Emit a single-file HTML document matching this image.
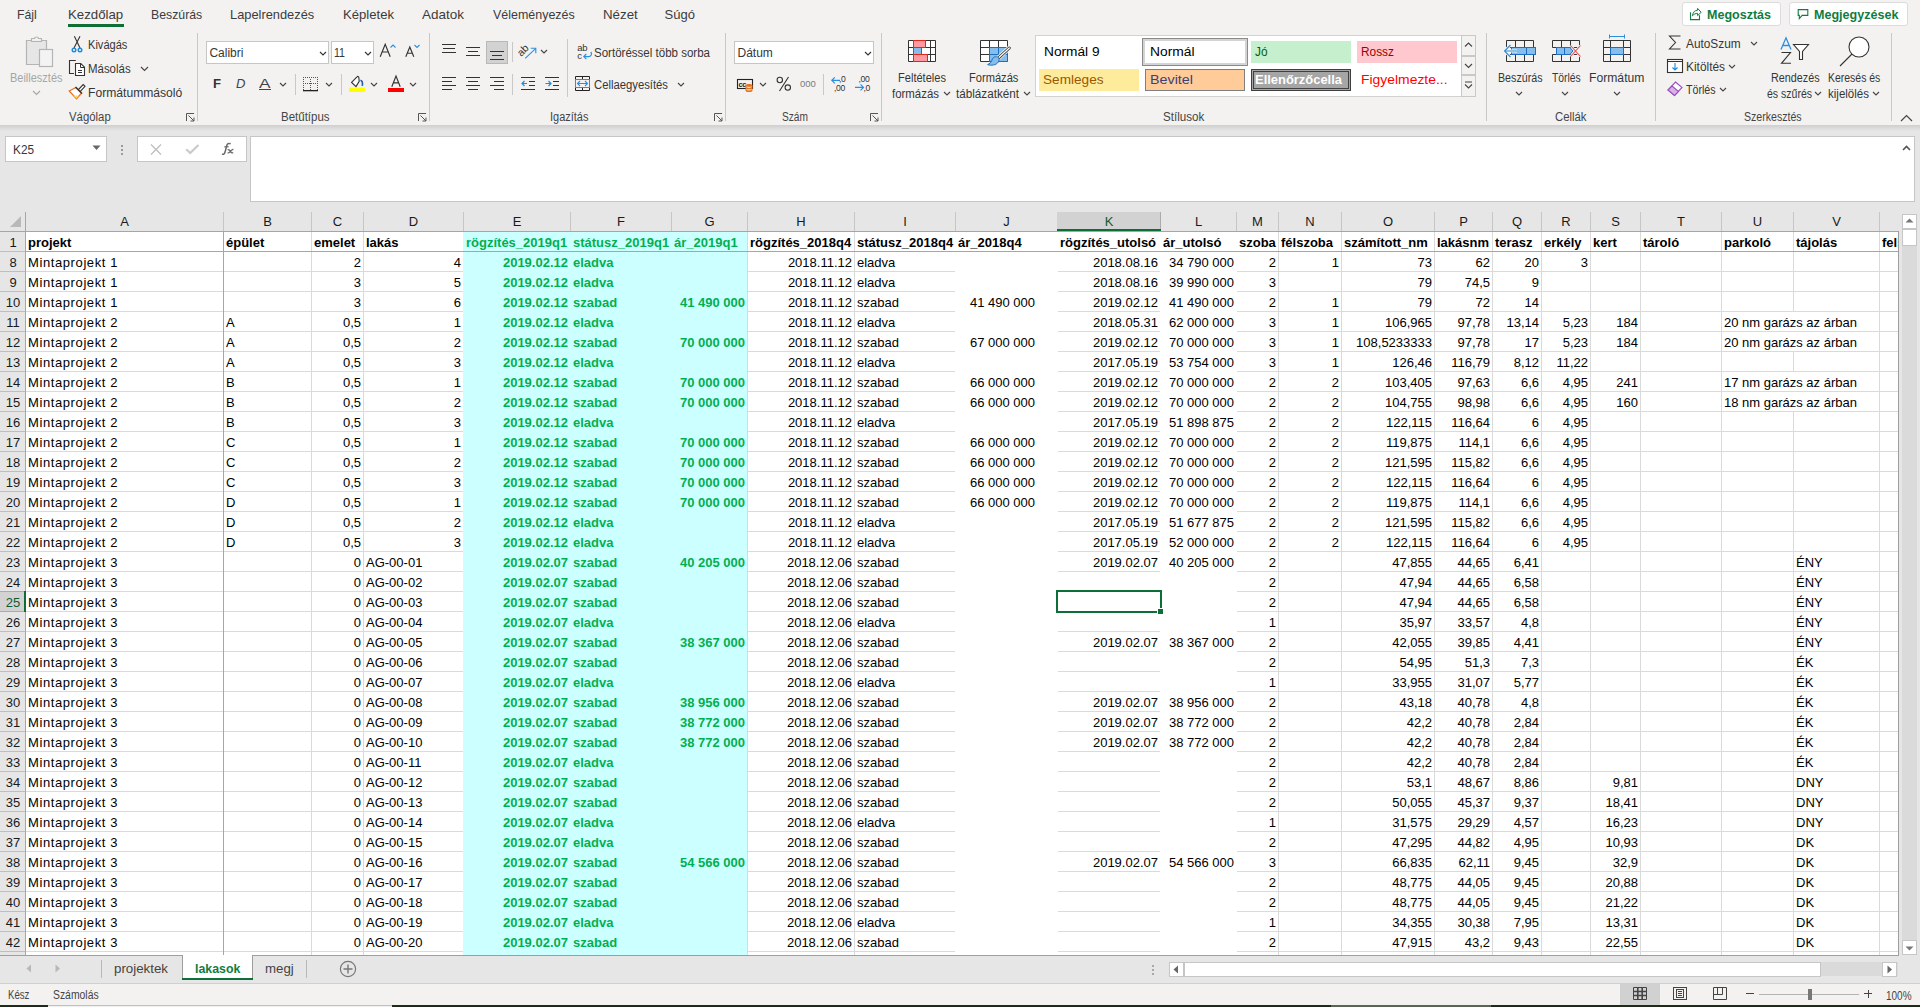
<!DOCTYPE html>
<html><head><meta charset="utf-8"><style>
html,body{margin:0;padding:0;width:1920px;height:1007px;overflow:hidden;background:#F3F2F1;}
body{position:relative;font-family:"Liberation Sans",sans-serif;}
body>div,body>svg{position:absolute;box-sizing:content-box;}
.t{white-space:nowrap;line-height:normal;}
svg{overflow:visible}
</style></head><body>
<div style="left:0px;top:0px;width:1920px;height:125px;background:#F3F2F1;"></div>
<div style="left:0px;top:125px;width:1920px;height:87px;background:#E6E6E6;"></div>
<div style="left:0;top:125px;width:1920px;height:6px;background:linear-gradient(#CFCFCF,#E6E6E6)"></div>
<div style="left:1899px;top:212px;width:21px;height:744px;background:#E6E6E6;"></div>
<div style="left:0px;top:956px;width:1920px;height:27px;background:#E6E6E6;"></div>
<div style="left:0px;top:983px;width:1920px;height:1px;background:#D0D0D0;"></div>
<div style="left:0px;top:984px;width:1920px;height:21px;background:#F3F2F1;"></div>
<div style="left:0px;top:1005px;width:1920px;height:2px;background:#1F2A1D;"></div>
<div style="left:48px;top:1005px;width:344px;height:1px;background:#C0C0C0;"></div>
<div style="left:48px;top:1006px;width:344px;height:1px;background:#F0F0F0;"></div>
<div style="left:1331px;top:1005px;width:160px;height:2px;background:#5A6555;"></div>
<div class="t" style="left:16.5px;top:7.23px;font-size:13px;color:#3C3C3C;font-weight:normal;transform:scaleX(0.9426);transform-origin:0 0;">Fájl</div>
<div class="t" style="left:67.75px;top:7.23px;font-size:13px;color:#3C3C3C;font-weight:normal;transform:scaleX(1.0187);transform-origin:0 0;">Kezdőlap</div>
<div class="t" style="left:150.75px;top:7.23px;font-size:13px;color:#3C3C3C;font-weight:normal;transform:scaleX(0.9455);transform-origin:0 0;">Beszúrás</div>
<div class="t" style="left:229.5px;top:7.23px;font-size:13px;color:#3C3C3C;font-weight:normal;transform:scaleX(0.9874);transform-origin:0 0;">Lapelrendezés</div>
<div class="t" style="left:342.75px;top:7.23px;font-size:13px;color:#3C3C3C;font-weight:normal;transform:scaleX(1.0077);transform-origin:0 0;">Képletek</div>
<div class="t" style="left:421.5px;top:7.23px;font-size:13px;color:#3C3C3C;font-weight:normal;transform:scaleX(1.0374);transform-origin:0 0;">Adatok</div>
<div class="t" style="left:492.5px;top:7.23px;font-size:13px;color:#3C3C3C;font-weight:normal;transform:scaleX(0.9584);transform-origin:0 0;">Véleményezés</div>
<div class="t" style="left:602.75px;top:7.23px;font-size:13px;color:#3C3C3C;font-weight:normal;transform:scaleX(1.0230);transform-origin:0 0;">Nézet</div>
<div class="t" style="left:664.5px;top:7.23px;font-size:13px;color:#3C3C3C;font-weight:normal;">Súgó</div>
<div style="left:68px;top:24px;width:56px;height:3px;background:#0D6E38;"></div>
<div style="left:1682px;top:2px;width:97px;height:22px;background:#fff;border:1px solid #DCDCDC;border-radius:3px"></div>
<div style="left:1789px;top:2px;width:117px;height:22px;background:#fff;border:1px solid #DCDCDC;border-radius:3px"></div>
<div class="t" style="left:1706.5px;top:7.23px;font-size:13px;color:#107C41;font-weight:bold;transform:scaleX(0.9629);transform-origin:0 0;">Megosztás</div>
<div class="t" style="left:1813.5px;top:7.23px;font-size:13px;color:#107C41;font-weight:bold;transform:scaleX(0.9662);transform-origin:0 0;">Megjegyzések</div>
<svg style="left:1686px;top:4px" width="20" height="20"><path d="M4.5 8.3 V15.6 H13.5 V11.2" fill="none" stroke="#107C41" stroke-width="1.1"/><path d="M6.4 11.8 C7 8 9 6.2 11.6 6.2 V4.4 L15.2 8.3 L11.6 11.6 V9.4 C9.5 9.3 8 10.2 6.4 11.8 Z" fill="none" stroke="#107C41" stroke-width="1"/></svg>
<svg style="left:1794px;top:4px" width="20" height="20"><path d="M4.2 5.6 H13.8 V11.4 H8.2 L5.3 14.6 V11.4 H4.2 Z" fill="none" stroke="#107C41" stroke-width="1.1"/></svg>
<div style="left:197px;top:33px;width:1px;height:88px;background:#C8C8C8;"></div>
<div style="left:429px;top:33px;width:1px;height:88px;background:#C8C8C8;"></div>
<div style="left:725px;top:33px;width:1px;height:88px;background:#C8C8C8;"></div>
<div style="left:881px;top:33px;width:1px;height:88px;background:#C8C8C8;"></div>
<div style="left:1486px;top:33px;width:1px;height:88px;background:#C8C8C8;"></div>
<div style="left:1655px;top:33px;width:1px;height:88px;background:#C8C8C8;"></div>
<div style="left:1891px;top:33px;width:1px;height:88px;background:#C8C8C8;"></div>
<div class="t" style="left:68.8px;top:109.64px;font-size:12px;color:#444;font-weight:normal;transform:scaleX(0.9471);transform-origin:0 0;">Vágólap</div>
<div class="t" style="left:281.4px;top:109.64px;font-size:12px;color:#444;font-weight:normal;transform:scaleX(0.9571);transform-origin:0 0;">Betűtípus</div>
<div class="t" style="left:550.1px;top:109.64px;font-size:12px;color:#444;font-weight:normal;transform:scaleX(0.9143);transform-origin:0 0;">Igazítás</div>
<div class="t" style="left:782.0px;top:109.64px;font-size:12px;color:#444;font-weight:normal;transform:scaleX(0.8477);transform-origin:0 0;">Szám</div>
<div class="t" style="left:1163.0px;top:109.64px;font-size:12px;color:#444;font-weight:normal;transform:scaleX(0.9667);transform-origin:0 0;">Stílusok</div>
<div class="t" style="left:1554.8px;top:109.64px;font-size:12px;color:#444;font-weight:normal;transform:scaleX(0.9443);transform-origin:0 0;">Cellák</div>
<div class="t" style="left:1743.9px;top:109.64px;font-size:12px;color:#444;font-weight:normal;transform:scaleX(0.8815);transform-origin:0 0;">Szerkesztés</div>
<svg style="left:186px;top:113px" width="9" height="9"><path d="M0.5 8 V0.5 H8" fill="none" stroke="#555" stroke-width="1"/><path d="M2.5 2.5 L8 8 M4.5 8 H8 V4.5" fill="none" stroke="#555" stroke-width="1"/></svg>
<svg style="left:418px;top:113px" width="9" height="9"><path d="M0.5 8 V0.5 H8" fill="none" stroke="#555" stroke-width="1"/><path d="M2.5 2.5 L8 8 M4.5 8 H8 V4.5" fill="none" stroke="#555" stroke-width="1"/></svg>
<svg style="left:714px;top:113px" width="9" height="9"><path d="M0.5 8 V0.5 H8" fill="none" stroke="#555" stroke-width="1"/><path d="M2.5 2.5 L8 8 M4.5 8 H8 V4.5" fill="none" stroke="#555" stroke-width="1"/></svg>
<svg style="left:870px;top:113px" width="9" height="9"><path d="M0.5 8 V0.5 H8" fill="none" stroke="#555" stroke-width="1"/><path d="M2.5 2.5 L8 8 M4.5 8 H8 V4.5" fill="none" stroke="#555" stroke-width="1"/></svg>
<svg style="left:1900px;top:114px" width="13" height="8"><polyline points="1,7 6.5,1.5 12,7" fill="none" stroke="#444" stroke-width="1.2"/></svg>
<div class="t" style="left:10.1px;top:70.74px;font-size:12px;color:#A6A6A6;font-weight:normal;transform:scaleX(0.9153);transform-origin:0 0;">Beillesztés</div>
<svg style="left:32.0px;top:90.25px" width="9" height="5.5"><polyline points="1,1 4.5,4.5 8,1" fill="none" stroke="#A6A6A6" stroke-width="1.1"/></svg>
<svg style="left:25px;top:36px" width="30" height="32"><path d="M1.5 4.5 H21.5 V28.5 H1.5 Z" fill="#E6E6E6" stroke="#B4B4B4" stroke-width="1.2"/><path d="M6.5 5.5 V2.5 H9.5 C9.5 0.5 13.5 0.5 13.5 2.5 H16.5 V5.5 Z" fill="#F0F0F0" stroke="#B4B4B4" stroke-width="1.1"/><rect x="14.5" y="13.5" width="13" height="17" fill="#F3F3F3" stroke="#B4B4B4" stroke-width="1.2"/></svg>
<div class="t" style="left:88.4px;top:38.14px;font-size:12px;color:#363636;font-weight:normal;transform:scaleX(0.9230);transform-origin:0 0;">Kivágás</div>
<div class="t" style="left:88.4px;top:62.14px;font-size:12px;color:#363636;font-weight:normal;transform:scaleX(0.9533);transform-origin:0 0;">Másolás</div>
<svg style="left:140.1px;top:65.75px" width="9" height="5.5"><polyline points="1,1 4.5,4.5 8,1" fill="none" stroke="#444" stroke-width="1.1"/></svg>
<div class="t" style="left:88.4px;top:85.94px;font-size:12px;color:#363636;font-weight:normal;transform:scaleX(1.0101);transform-origin:0 0;">Formátummásoló</div>
<svg style="left:70px;top:35px" width="14" height="18"><path d="M4.4 1.2 L10 13 M10 1.2 L4 13" fill="none" stroke="#333" stroke-width="1.1"/><circle cx="4" cy="15" r="1.8" fill="none" stroke="#1E8BDA" stroke-width="1.4"/><circle cx="10" cy="15" r="1.8" fill="none" stroke="#1E8BDA" stroke-width="1.4"/></svg>
<svg style="left:68px;top:59px" width="18" height="18"><path d="M7.8 1.5 H1.5 V14.5 H6" fill="none" stroke="#333" stroke-width="1.1"/><path d="M7.5 4.5 H12.8 L16.5 8.2 V16.5 H7.5 Z" fill="#fff" stroke="#333" stroke-width="1.1"/><path d="M12.5 4.5 V8.5 H16.5" fill="none" stroke="#333" stroke-width="1"/><path d="M10 11.5 H14 M10 13.5 H14" stroke="#333" stroke-width="1"/></svg>
<svg style="left:68px;top:83px" width="18" height="17"><path d="M1.2 8 L8 4.5 L13.5 10.2 L8.5 15.8 Z" fill="#fff" stroke="#E8711B" stroke-width="1.3"/><path d="M5 12.5 L8.5 15.5 L11 12.8 Z" fill="#FFD36B"/><path d="M10.5 6.5 L15.2 1.5 L17 3.3 L12.3 8.3" fill="#fff" stroke="#333" stroke-width="1.1"/><path d="M7.5 4 L14 10.5" stroke="#333" stroke-width="1.4"/></svg>
<div style="left:206px;top:41px;width:121px;height:21px;background:#fff;border:1px solid #C6C6C6"></div>
<div style="left:331px;top:41px;width:41px;height:21px;background:#fff;border:1px solid #C6C6C6"></div>
<div class="t" style="left:209.4px;top:45.64px;font-size:12px;color:#363636;font-weight:normal;">Calibri</div>
<div class="t" style="left:334px;top:45.64px;font-size:12px;color:#363636;font-weight:normal;transform:scaleX(0.8833);transform-origin:0 0;">11</div>
<svg style="left:318.5px;top:51.0px" width="8" height="5.0"><polyline points="1,1 4.0,4.0 7,1" fill="none" stroke="#333" stroke-width="1.1"/></svg>
<svg style="left:363.5px;top:51.0px" width="8" height="5.0"><polyline points="1,1 4.0,4.0 7,1" fill="none" stroke="#333" stroke-width="1.1"/></svg>
<svg style="left:379px;top:43px" width="18" height="15"><path d="M1.2 13.8 L6.2 1.2 L11.2 13.8 M3.2 9 H9.2" fill="none" stroke="#333" stroke-width="1.15"/></svg>
<svg style="left:390px;top:44px" width="6" height="4"><polyline points="0.5,3.5 3,1 5.5,3.5" fill="none" stroke="#2B8FE0" stroke-width="1.1"/></svg>
<svg style="left:405px;top:46px" width="11" height="12"><path d="M0.8 10.8 L4.8 1 L8.8 10.8 M2.4 7.2 H7.2" fill="none" stroke="#333" stroke-width="1.15"/></svg>
<svg style="left:414px;top:44px" width="6" height="4"><polyline points="0.5,1 3,3.5 5.5,1" fill="none" stroke="#2B8FE0" stroke-width="1.1"/></svg>
<div class="t" style="left:213px;top:76.23px;font-size:13px;color:#333;font-weight:bold;transform:scaleX(1.0079);transform-origin:0 0;">F</div>
<div class="t" style="left:236px;top:76.2px;font-size:13px;color:#444;font-style:italic;">D</div>
<div class="t" style="left:258.75px;top:76.23px;font-size:13px;color:#444;font-weight:normal;transform:scaleX(1.3261);transform-origin:0 0;">A</div>
<div style="left:259px;top:89px;width:12px;height:1px;background:#444;"></div>
<svg style="left:278.5px;top:81.5px" width="8" height="5.0"><polyline points="1,1 4.0,4.0 7,1" fill="none" stroke="#444" stroke-width="1.1"/></svg>
<div style="left:295px;top:74px;width:1px;height:21px;background:#C8C8C8;"></div>
<svg style="left:303px;top:77px" width="16" height="15"><g fill="#555"><rect x="0" y="0" width="1" height="1"/><rect x="0" y="6" width="1" height="1"/><rect x="2" y="0" width="1" height="1"/><rect x="2" y="6" width="1" height="1"/><rect x="4" y="0" width="1" height="1"/><rect x="4" y="6" width="1" height="1"/><rect x="6" y="0" width="1" height="1"/><rect x="6" y="6" width="1" height="1"/><rect x="8" y="0" width="1" height="1"/><rect x="8" y="6" width="1" height="1"/><rect x="10" y="0" width="1" height="1"/><rect x="10" y="6" width="1" height="1"/><rect x="12" y="0" width="1" height="1"/><rect x="12" y="6" width="1" height="1"/><rect x="14" y="0" width="1" height="1"/><rect x="14" y="6" width="1" height="1"/><rect x="0" y="2" width="1" height="1"/><rect x="7" y="2" width="1" height="1"/><rect x="14" y="2" width="1" height="1"/><rect x="0" y="4" width="1" height="1"/><rect x="7" y="4" width="1" height="1"/><rect x="14" y="4" width="1" height="1"/><rect x="0" y="6" width="1" height="1"/><rect x="7" y="6" width="1" height="1"/><rect x="14" y="6" width="1" height="1"/><rect x="0" y="8" width="1" height="1"/><rect x="7" y="8" width="1" height="1"/><rect x="14" y="8" width="1" height="1"/><rect x="0" y="10" width="1" height="1"/><rect x="7" y="10" width="1" height="1"/><rect x="14" y="10" width="1" height="1"/><rect x="0" y="12" width="1" height="1"/><rect x="7" y="12" width="1" height="1"/><rect x="14" y="12" width="1" height="1"/></g><rect x="0" y="13" width="15" height="1.3" fill="#222"/></svg>
<svg style="left:324.75px;top:81.5px" width="8" height="5.0"><polyline points="1,1 4.0,4.0 7,1" fill="none" stroke="#444" stroke-width="1.1"/></svg>
<div style="left:341px;top:74px;width:1px;height:21px;background:#C8C8C8;"></div>
<svg style="left:349px;top:74px" width="18" height="19"><path d="M2.6 8.4 L8 2.8 C8.6 2.1 9.7 2.3 9.8 3.3 L10.2 7.4 L7 12.6 Z" fill="#fff" stroke="#333" stroke-width="1.1"/><path d="M11.4 6.2 C13 6.6 13.8 9 13.3 11.8" fill="none" stroke="#1E5FB4" stroke-width="1.6"/><rect x="0" y="13.8" width="16" height="4.2" fill="#FFFF00"/></svg>
<svg style="left:370.0px;top:81.5px" width="8" height="5.0"><polyline points="1,1 4.0,4.0 7,1" fill="none" stroke="#444" stroke-width="1.1"/></svg>
<svg style="left:391px;top:75px" width="11" height="13"><path d="M0.8 11.8 L5 1 L9.2 11.8 M2.5 7.8 H7.5" fill="none" stroke="#333" stroke-width="1.15"/></svg>
<div style="left:388px;top:88px;width:16px;height:4px;background:#FF0000;"></div>
<svg style="left:409.0px;top:81.5px" width="8" height="5.0"><polyline points="1,1 4.0,4.0 7,1" fill="none" stroke="#444" stroke-width="1.1"/></svg>
<svg style="left:442px;top:44px" width="16" height="16"><rect x="0" y="0" width="14" height="1" fill="#333"/><rect x="1" y="4" width="12" height="1" fill="#333"/><rect x="0" y="8" width="14" height="1" fill="#333"/></svg>
<svg style="left:466px;top:47px" width="16" height="16"><rect x="0" y="0" width="14" height="1" fill="#333"/><rect x="2" y="4" width="10" height="1" fill="#333"/><rect x="0" y="8" width="14" height="1" fill="#333"/></svg>
<div style="left:486px;top:41px;width:20px;height:21px;background:#D2D2D2;border:1px solid #B8B8B8"></div>
<svg style="left:490px;top:51px" width="16" height="16"><rect x="0" y="0" width="14" height="1" fill="#333"/><rect x="2" y="4" width="10" height="1" fill="#333"/><rect x="0" y="8" width="14" height="1" fill="#333"/></svg>
<div style="left:512px;top:42px;width:1px;height:20px;background:#C8C8C8;"></div>
<svg style="left:518px;top:42px" width="20" height="18"><text x="0" y="0" font-size="10.5" font-family="Liberation Sans" fill="#333" transform="translate(3.2 15) rotate(-45)">ab</text><path d="M7.2 16.4 L17.6 6.6" fill="none" stroke="#2B8FE0" stroke-width="1.1"/><path d="M12.8 6.3 H17.8 V11.3" fill="none" stroke="#2B8FE0" stroke-width="1.1"/></svg>
<svg style="left:539.75px;top:49.0px" width="8" height="5.0"><polyline points="1,1 4.0,4.0 7,1" fill="none" stroke="#444" stroke-width="1.1"/></svg>
<svg style="left:442px;top:77px" width="16" height="16"><rect x="0" y="0" width="14" height="1" fill="#333"/><rect x="0" y="4" width="10" height="1" fill="#333"/><rect x="0" y="8" width="14" height="1" fill="#333"/><rect x="0" y="12" width="10" height="1" fill="#333"/></svg>
<svg style="left:466px;top:77px" width="16" height="16"><rect x="0" y="0" width="14" height="1" fill="#333"/><rect x="2" y="4" width="10" height="1" fill="#333"/><rect x="0" y="8" width="14" height="1" fill="#333"/><rect x="2" y="12" width="10" height="1" fill="#333"/></svg>
<svg style="left:490px;top:77px" width="16" height="16"><rect x="0" y="0" width="14" height="1" fill="#333"/><rect x="4" y="4" width="10" height="1" fill="#333"/><rect x="0" y="8" width="14" height="1" fill="#333"/><rect x="4" y="12" width="10" height="1" fill="#333"/></svg>
<div style="left:512px;top:74px;width:1px;height:21px;background:#C8C8C8;"></div>
<svg style="left:521px;top:77px" width="16" height="15"><rect x="0" y="0" width="14" height="1" fill="#333"/><rect x="8" y="4" width="6" height="1" fill="#333"/><rect x="8" y="8" width="6" height="1" fill="#333"/><rect x="0" y="12" width="14" height="1" fill="#333"/><path d="M6 6.5 H1 M3.5 4 L1 6.5 L3.5 9" fill="none" stroke="#1E8BDA" stroke-width="1.2"/></svg>
<svg style="left:545px;top:77px" width="16" height="15"><rect x="0" y="0" width="14" height="1" fill="#333"/><rect x="8" y="4" width="6" height="1" fill="#333"/><rect x="8" y="8" width="6" height="1" fill="#333"/><rect x="0" y="12" width="14" height="1" fill="#333"/><path d="M0.5 6.5 H6 M3.5 4 L6 6.5 L3.5 9" fill="none" stroke="#1E8BDA" stroke-width="1.2"/></svg>
<div style="left:567px;top:39px;width:1px;height:58px;background:#C8C8C8;"></div>
<svg style="left:576px;top:43px" width="18" height="19"><text x="1.2" y="8.3" font-size="9.5" font-family="Liberation Sans" fill="#333" letter-spacing="-0.2">ab</text><text x="1.2" y="15.7" font-size="9.5" font-family="Liberation Sans" fill="#333">c</text><path d="M14.8 9 C16.5 11 15 13.6 12.5 13.6 H8" fill="none" stroke="#2B8FE0" stroke-width="1.2"/><path d="M10.3 11 L7.8 13.6 L10.3 16.2" fill="none" stroke="#2B8FE0" stroke-width="1.2"/></svg>
<div class="t" style="left:594.4px;top:46.14px;font-size:12px;color:#363636;font-weight:normal;transform:scaleX(0.9610);transform-origin:0 0;">Sortöréssel több sorba</div>
<svg style="left:575px;top:76px" width="16" height="16"><path d="M0.5 3.5 V0.5 H14.5 V3.5 M0.5 11.5 V14.5 H14.5 V11.5 M7.5 0.5 V3.5 M7.5 11.5 V14.5" fill="none" stroke="#222" stroke-width="1"/><rect x="0.5" y="3.5" width="14" height="8" fill="none" stroke="#2B8FE0" stroke-width="1"/><path d="M2.5 7.5 H12.5 M5 5 L2.5 7.5 L5 10 M10 5 L12.5 7.5 L10 10" fill="none" stroke="#2B8FE0" stroke-width="1.1"/></svg>
<div class="t" style="left:594.4px;top:77.74px;font-size:12px;color:#363636;font-weight:normal;transform:scaleX(0.9402);transform-origin:0 0;">Cellaegyesítés</div>
<svg style="left:677.0px;top:81.5px" width="8" height="5.0"><polyline points="1,1 4.0,4.0 7,1" fill="none" stroke="#444" stroke-width="1.1"/></svg>
<div style="left:734px;top:41px;width:138px;height:21px;background:#fff;border:1px solid #C6C6C6"></div>
<div class="t" style="left:737.5px;top:45.64px;font-size:12px;color:#363636;font-weight:normal;">Dátum</div>
<svg style="left:863.5px;top:51.0px" width="8" height="5.0"><polyline points="1,1 4.0,4.0 7,1" fill="none" stroke="#333" stroke-width="1.1"/></svg>
<svg style="left:736px;top:78px" width="19" height="15"><rect x="1.5" y="1.5" width="15" height="9" fill="none" stroke="#222" stroke-width="1.1"/><text x="2.6" y="8.8" font-size="7.5" font-weight="bold" font-family="Liberation Sans" fill="#222" letter-spacing="-0.6">cc</text><path d="M9.5 7.5 C9.5 5.5 16.5 5.5 16.5 7.5 V12.5 C16.5 14.5 9.5 14.5 9.5 12.5 Z" fill="#E8711B"/><path d="M10.5 8.8 C11.5 9.6 14.5 9.6 15.5 8.8 M10.5 11.3 C11.5 12.1 14.5 12.1 15.5 11.3" fill="none" stroke="#fff" stroke-width="0.9"/></svg>
<svg style="left:758.5px;top:81.5px" width="8" height="5.0"><polyline points="1,1 4.0,4.0 7,1" fill="none" stroke="#444" stroke-width="1.1"/></svg>
<svg style="left:776px;top:76px" width="16" height="16"><circle cx="3.8" cy="4" r="2.7" fill="none" stroke="#333" stroke-width="1.1"/><circle cx="11.8" cy="11.6" r="2.7" fill="none" stroke="#333" stroke-width="1.1"/><path d="M12.5 1 L3.5 15" stroke="#333" stroke-width="1.1"/></svg>
<div class="t" style="left:799.5px;top:78.84px;font-size:8.8px;color:#7A7A7A;font-weight:normal;transform:scaleX(1.0769);transform-origin:0 0;">000</div>
<div style="left:823px;top:74px;width:1px;height:21px;background:#C8C8C8;"></div>
<svg style="left:830px;top:75px" width="17" height="17"><text x="9" y="7.2" font-size="8.6" font-family="Liberation Sans" fill="#333" letter-spacing="-0.3">,0</text><text x="4" y="15.8" font-size="8.6" font-family="Liberation Sans" fill="#333" letter-spacing="-0.3">,00</text><path d="M10 5.3 H1.8 M4.8 2.3 L1.8 5.3 L4.8 8.3" fill="none" stroke="#2B8FE0" stroke-width="1.2"/></svg>
<svg style="left:854px;top:75px" width="17" height="17"><text x="4.5" y="7.2" font-size="8.6" font-family="Liberation Sans" fill="#333" letter-spacing="-0.3">,00</text><text x="9.5" y="15.8" font-size="8.6" font-family="Liberation Sans" fill="#333" letter-spacing="-0.3">,0</text><path d="M1 12.4 H9.5 M6.5 9.4 L9.5 12.4 L6.5 15.4" fill="none" stroke="#2B8FE0" stroke-width="1.2"/></svg>
<svg style="left:908px;top:40px" width="29" height="23"><path d="M0.5 0.5 H27.5 V21.5 H0.5 Z M0.5 7.5 H27.5 M0.5 14.5 H27.5 M5.5 0.5 V21.5 M22.5 0.5 V21.5" fill="#fff" stroke="#333" stroke-width="1"/><rect x="5.5" y="0.5" width="12" height="7" fill="#FF9AA0" stroke="#E0261B" stroke-width="1"/><rect x="5.5" y="7.5" width="8" height="7" fill="#86BDEB" stroke="#1F6FC0" stroke-width="1"/><rect x="5.5" y="14.5" width="14" height="7" fill="#FF9AA0" stroke="#E0261B" stroke-width="1"/></svg>
<div class="t" style="left:897.5px;top:70.89px;font-size:12px;color:#363636;font-weight:normal;transform:scaleX(0.9228);transform-origin:0 0;">Feltételes</div>
<div class="t" style="left:892px;top:86.54px;font-size:12px;color:#363636;font-weight:normal;transform:scaleX(0.9525);transform-origin:0 0;">formázás</div>
<svg style="left:943.0px;top:90.5px" width="8" height="5.0"><polyline points="1,1 4.0,4.0 7,1" fill="none" stroke="#444" stroke-width="1.1"/></svg>
<svg style="left:980px;top:40px" width="32" height="26"><path d="M0.5 0.5 H27.5 V21.5 H0.5 Z M0.5 7.5 H27.5 M0.5 14.5 H27.5 M9.5 0.5 V21.5 M18.5 0.5 V21.5" fill="#fff" stroke="#333" stroke-width="1"/><path d="M9.5 7.5 H27.5 V21.5 H9.5 Z M18.5 7.5 V21.5 M9.5 14.5 H27.5" fill="#86BDEB" stroke="#1F6FC0" stroke-width="1"/><path d="M29.3 8 L17.5 18.8" stroke="#F3F2F1" stroke-width="4.6" stroke-linecap="round"/><path d="M29.3 8 L17.5 18.8" stroke="#333" stroke-width="3" stroke-linecap="round"/><path d="M29.3 8 L17.5 18.8" stroke="#fff" stroke-width="1.3" stroke-linecap="round"/><path d="M18.5 17.5 C16 15.8 12.8 17 12 20 C11.4 22.3 9.5 23.8 7.6 24.6 C11 25.8 16.2 25.2 18.2 22.2 C19.2 20.6 19.3 18.8 18.5 17.5 Z" fill="#86BDEB" stroke="#1F6FC0" stroke-width="1"/></svg>
<div class="t" style="left:969.4px;top:70.89px;font-size:12px;color:#363636;font-weight:normal;transform:scaleX(0.9261);transform-origin:0 0;">Formázás</div>
<div class="t" style="left:956px;top:86.54px;font-size:12px;color:#363636;font-weight:normal;transform:scaleX(0.9739);transform-origin:0 0;">táblázatként</div>
<svg style="left:1023.0px;top:90.5px" width="8" height="5.0"><polyline points="1,1 4.0,4.0 7,1" fill="none" stroke="#444" stroke-width="1.1"/></svg>
<div style="left:1035px;top:35px;width:439px;height:60px;background:#fff;border:1px solid #D2D2D2"></div>
<div class="t" style="left:1043.75px;top:44.99px;font-size:12.5px;color:#000;font-weight:normal;transform:scaleX(1.0946);transform-origin:0 0;">Normál 9</div>
<div style="left:1142px;top:38px;width:104px;height:26px;background:#fff;border:1px solid #8A8A8A;box-shadow:inset 0 0 0 2px #D4D4D4"></div>
<div class="t" style="left:1149.75px;top:44.99px;font-size:12.5px;color:#000;font-weight:normal;transform:scaleX(1.1047);transform-origin:0 0;">Normál</div>
<div style="left:1251px;top:41px;width:100px;height:22px;background:#C6EFCE;"></div>
<div class="t" style="left:1254.5px;top:44.99px;font-size:12.5px;color:#006100;font-weight:normal;transform:scaleX(0.9467);transform-origin:0 0;">Jó</div>
<div style="left:1357px;top:41px;width:100px;height:22px;background:#FFC7CE;"></div>
<div class="t" style="left:1361px;top:44.99px;font-size:12.5px;color:#9C0006;font-weight:normal;transform:scaleX(0.9501);transform-origin:0 0;">Rossz</div>
<div style="left:1039px;top:69px;width:100px;height:22px;background:#FFEB9C;"></div>
<div class="t" style="left:1043px;top:72.69px;font-size:12.5px;color:#9C5700;font-weight:normal;transform:scaleX(1.0883);transform-origin:0 0;">Semleges</div>
<div style="left:1145px;top:69px;width:98px;height:20px;background:#FFCC99;border:1px solid #7F7F7F"></div>
<div class="t" style="left:1149.5px;top:72.69px;font-size:12.5px;color:#3F3F76;font-weight:normal;transform:scaleX(1.1457);transform-origin:0 0;">Bevitel</div>
<div style="left:1251px;top:69px;width:98px;height:20px;background:#A5A5A5;border:1px solid #3F3F3F;box-shadow:inset 0 0 0 1px #A5A5A5, inset 0 0 0 2px #3F3F3F"></div>
<div class="t" style="left:1255px;top:72.69px;font-size:12.5px;color:#fff;font-weight:bold;transform:scaleX(1.0349);transform-origin:0 0;">Ellenőrzőcella</div>
<div class="t" style="left:1361px;top:72.69px;font-size:12.5px;color:#FF0000;font-weight:normal;transform:scaleX(1.1119);transform-origin:0 0;">Figyelmezte...</div>
<div style="left:1461px;top:35px;width:13px;height:19px;background:#F3F2F1;border:1px solid #C8C8C8"></div>
<div style="left:1461px;top:56px;width:13px;height:17px;background:#F3F2F1;border:1px solid #C8C8C8"></div>
<div style="left:1461px;top:75px;width:13px;height:20px;background:#F3F2F1;border:1px solid #C8C8C8"></div>
<svg style="left:1464px;top:42px" width="9" height="5"><polyline points="1,4.5 4.5,1 8,4.5" fill="none" stroke="#444" stroke-width="1.1"/></svg>
<svg style="left:1464px;top:63px" width="9" height="5"><polyline points="1,1 4.5,4.5 8,1" fill="none" stroke="#444" stroke-width="1.1"/></svg>
<svg style="left:1464px;top:81px" width="9" height="9"><rect x="1" y="0.5" width="7" height="1" fill="#444"/><polyline points="1,3.5 4.5,7 8,3.5" fill="none" stroke="#444" stroke-width="1.1"/></svg>
<svg style="left:1503px;top:40px" width="34" height="23"><path d="M3.5 0.5 H30.5 V21.5 H3.5 Z M3.5 7.5 H30.5 M3.5 14.5 H30.5 M12.5 0.5 V21.5 M21.5 0.5 V21.5" fill="none" stroke="#333" stroke-width="1"/><rect x="8.5" y="7.5" width="24" height="7" fill="#86BDEB" stroke="#1B6EC2" stroke-width="1"/><path d="M23.5 7.5 V14.5" stroke="#1B6EC2" stroke-width="1"/><path d="M14 11 H2 M7.5 5 L1.5 11 L7.5 17" fill="none" stroke="#F3F2F1" stroke-width="3"/><path d="M14 11 H2 M7.5 5 L1.5 11 L7.5 17" fill="none" stroke="#2B8FE0" stroke-width="1.1"/></svg>
<div class="t" style="left:1497.5px;top:70.89px;font-size:12px;color:#363636;font-weight:normal;transform:scaleX(0.8897);transform-origin:0 0;">Beszúrás</div>
<svg style="left:1515.4px;top:90.5px" width="8" height="5.0"><polyline points="1,1 4.0,4.0 7,1" fill="none" stroke="#444" stroke-width="1.1"/></svg>
<svg style="left:1551px;top:40px" width="32" height="23"><path d="M1.5 7.5 V0.5 H28.5 V7.5 M1.5 14.5 V21.5 H28.5 V14.5 M1.5 7.5 H5.5 M1.5 14.5 H5.5 M10.5 0.5 V7.5 M10.5 14.5 V21.5 M19.5 0.5 V21.5 M19.5 7.5 H28.5 M19.5 14.5 H28.5" fill="none" stroke="#333" stroke-width="1"/><path d="M5.5 7.5 H19 L22 11 L19 14.5 H5.5 Z" fill="#86BDEB" stroke="#1B6EC2" stroke-width="1"/><path d="M13.5 7.5 V14.5" stroke="#1B6EC2" stroke-width="1"/><path d="M19.5 5.5 L29.5 16.5 M29.5 5.5 L19.5 16.5" stroke="#F3F2F1" stroke-width="2.5"/><path d="M19.5 5.5 L29.5 16.5 M29.5 5.5 L19.5 16.5" stroke="#E84C4C" stroke-width="1.1"/></svg>
<div class="t" style="left:1551.8px;top:70.89px;font-size:12px;color:#363636;font-weight:normal;transform:scaleX(0.8607);transform-origin:0 0;">Törlés</div>
<svg style="left:1561.4px;top:90.5px" width="8" height="5.0"><polyline points="1,1 4.0,4.0 7,1" fill="none" stroke="#444" stroke-width="1.1"/></svg>
<svg style="left:1603px;top:34px" width="29" height="29"><path d="M6.5 2.5 H21.5" stroke="#2B8FE0" stroke-width="1"/><path d="M6.5 0.5 V4.5 M21.5 0.5 V4.5" stroke="#2B8FE0" stroke-width="1"/><path d="M0.5 6.5 H27.5 V27.5 H0.5 Z M0.5 13.5 H27.5 M0.5 20.5 H27.5 M7.5 6.5 V27.5 M20.5 6.5 V27.5" fill="none" stroke="#333" stroke-width="1"/><rect x="7.5" y="13.5" width="13" height="7" fill="#86BDEB" stroke="#1B6EC2" stroke-width="1"/></svg>
<div class="t" style="left:1589px;top:70.89px;font-size:12px;color:#363636;font-weight:normal;transform:scaleX(1.0133);transform-origin:0 0;">Formátum</div>
<svg style="left:1612.5px;top:90.5px" width="8" height="5.0"><polyline points="1,1 4.0,4.0 7,1" fill="none" stroke="#444" stroke-width="1.1"/></svg>
<svg style="left:1668px;top:35px" width="14" height="16"><path d="M12.5 1 H1.5 L7.5 7.5 L1.5 14 H12.5" fill="none" stroke="#333" stroke-width="1.1"/></svg>
<div class="t" style="left:1686px;top:36.89px;font-size:12px;color:#363636;font-weight:normal;transform:scaleX(0.9866);transform-origin:0 0;">AutoSzum</div>
<svg style="left:1750.4px;top:41.1px" width="8" height="5.0"><polyline points="1,1 4.0,4.0 7,1" fill="none" stroke="#444" stroke-width="1.1"/></svg>
<svg style="left:1667px;top:59px" width="17" height="15"><rect x="0.5" y="0.5" width="15" height="13" fill="#fff" stroke="#333" stroke-width="1.1"/><path d="M0.5 2.5 H15.5" stroke="#333" stroke-width="1"/><path d="M8 4 V11 M5.5 8.5 L8 11 L10.5 8.5" fill="none" stroke="#1E8BDA" stroke-width="1.1"/></svg>
<div class="t" style="left:1686px;top:59.64px;font-size:12px;color:#363636;font-weight:normal;transform:scaleX(0.9913);transform-origin:0 0;">Kitöltés</div>
<svg style="left:1728.0px;top:64.0px" width="8" height="5.0"><polyline points="1,1 4.0,4.0 7,1" fill="none" stroke="#444" stroke-width="1.1"/></svg>
<svg style="left:1667px;top:81px" width="16" height="16"><path d="M8.5 1 L15 6.5 L7.5 14.5 L1 9 Z" fill="#fff" stroke="#9B4FBF" stroke-width="1.1"/><path d="M5 5 L11.5 10.5 L7.5 14.5 L1 9 Z" fill="#D9B3E8" stroke="#9B4FBF" stroke-width="1.1"/></svg>
<div class="t" style="left:1686px;top:82.74px;font-size:12px;color:#363636;font-weight:normal;transform:scaleX(0.8877);transform-origin:0 0;">Törlés</div>
<svg style="left:1718.75px;top:87.0px" width="8" height="5.0"><polyline points="1,1 4.0,4.0 7,1" fill="none" stroke="#444" stroke-width="1.1"/></svg>
<svg style="left:1780px;top:37px" width="30" height="28"><path d="M1 12.5 L6 0.8 L11 12.5 M2.8 8.5 H9.2" fill="none" stroke="#2B8FE0" stroke-width="1.3"/><path d="M1.5 15.5 H10.5 L1.5 26.3 H11" fill="none" stroke="#333" stroke-width="1.1"/><path d="M13.5 7.5 H28.5 L22.5 14.5 V22.5 H19.5 V14.5 Z" fill="#fff" stroke="#333" stroke-width="1.1"/></svg>
<div class="t" style="left:1770.6px;top:70.89px;font-size:12px;color:#363636;font-weight:normal;transform:scaleX(0.8995);transform-origin:0 0;">Rendezés</div>
<div class="t" style="left:1766.5px;top:86.54px;font-size:12px;color:#363636;font-weight:normal;transform:scaleX(0.8764);transform-origin:0 0;">és szűrés</div>
<svg style="left:1814.0px;top:90.5px" width="8" height="5.0"><polyline points="1,1 4.0,4.0 7,1" fill="none" stroke="#444" stroke-width="1.1"/></svg>
<svg style="left:1839px;top:36px" width="32" height="31"><circle cx="20" cy="11" r="10" fill="#fff" stroke="#333" stroke-width="1.1"/><path d="M13 18 L1 30" stroke="#333" stroke-width="1.1"/></svg>
<div class="t" style="left:1828.4px;top:70.74px;font-size:12px;color:#363636;font-weight:normal;transform:scaleX(0.8714);transform-origin:0 0;">Keresés és</div>
<div class="t" style="left:1828.4px;top:86.64px;font-size:12px;color:#363636;font-weight:normal;transform:scaleX(0.9601);transform-origin:0 0;">kijelölés</div>
<svg style="left:1872.0px;top:90.5px" width="8" height="5.0"><polyline points="1,1 4.0,4.0 7,1" fill="none" stroke="#444" stroke-width="1.1"/></svg>
<div style="left:5px;top:136px;width:100px;height:24px;background:#fff;border:1px solid #C6C6C6"></div>
<div class="t" style="left:12.5px;top:143.14px;font-size:12px;color:#363636;font-weight:normal;transform:scaleX(0.9839);transform-origin:0 0;">K25</div>
<svg style="left:92px;top:145px" width="9" height="6"><polygon points="0.5,0.5 8.5,0.5 4.5,5" fill="#666"/></svg>
<div style="left:121px;top:145px;width:2px;height:2px;background:#9B9B9B;"></div>
<div style="left:121px;top:149px;width:2px;height:2px;background:#9B9B9B;"></div>
<div style="left:121px;top:153px;width:2px;height:2px;background:#9B9B9B;"></div>
<div style="left:137px;top:136px;width:108px;height:24px;background:#fff;border:1px solid #C6C6C6"></div>
<svg style="left:150px;top:144px" width="12" height="11"><path d="M1 0.5 L11 10.5 M11 0.5 L1 10.5" stroke="#BDBDBD" stroke-width="1.2"/></svg>
<svg style="left:185px;top:143px" width="15" height="12"><path d="M1.2 6.2 L5.2 10 L13.5 2" fill="none" stroke="#CACACA" stroke-width="2.2"/></svg>
<svg style="left:220px;top:141px" width="16" height="16"><path d="M2 13.2 C3.8 13.8 4.6 12.8 5.2 10.5 L6.6 5 C7.2 2.6 8.6 2 10.6 2.8" fill="none" stroke="#6A6A6A" stroke-width="1.5"/><path d="M4.3 5.8 H8.6" stroke="#6A6A6A" stroke-width="1.2"/><path d="M7.6 8.6 C9.5 8.2 10 9.5 10.8 11 C11.3 12 12 12 13.2 11.6 M13.4 8.2 C12 8.8 10.5 10.2 9.5 11.3 C9 11.8 8.4 12 7.6 11.8" fill="none" stroke="#6A6A6A" stroke-width="1.3"/></svg>
<div style="left:250px;top:136px;width:1663px;height:64px;background:#fff;border:1px solid #C6C6C6"></div>
<svg style="left:1902px;top:145px" width="9" height="6"><polyline points="1,5 4.5,1.5 8,5" fill="none" stroke="#555" stroke-width="1.6"/></svg>
<div style="left:1902px;top:229px;width:15px;height:711px;background:#DADADA;"></div>
<div style="left:1902px;top:214px;width:13px;height:13px;background:#fff;border:1px solid #C6C6C6"></div>
<div style="left:1902px;top:229px;width:13px;height:15px;background:#fff;border:1px solid #C6C6C6"></div>
<div style="left:1902px;top:940px;width:13px;height:13px;background:#fff;border:1px solid #C6C6C6"></div>
<svg style="left:1905px;top:218px" width="9" height="5"><polygon points="0.5,4.5 4.5,0.5 8.5,4.5" fill="#777"/></svg>
<svg style="left:1905px;top:946px" width="9" height="5"><polygon points="0.5,0.5 4.5,4.5 8.5,0.5" fill="#777"/></svg>
<div style="left:101px;top:960px;width:1px;height:18px;background:#B8B8B8;"></div>
<div style="left:306px;top:960px;width:1px;height:18px;background:#B8B8B8;"></div>
<svg style="left:26px;top:964px" width="6" height="9"><polygon points="5,0.5 5,8.5 0.5,4.5" fill="#B8B8B8"/></svg>
<svg style="left:55px;top:964px" width="6" height="9"><polygon points="0.5,0.5 0.5,8.5 5,4.5" fill="#B8B8B8"/></svg>
<div class="t" style="left:114.4px;top:960.94px;font-size:13px;color:#444;font-weight:normal;transform:scaleX(1.0234);transform-origin:0 0;">projektek</div>
<div class="t" style="left:265.2px;top:960.94px;font-size:13px;color:#444;font-weight:normal;transform:scaleX(1.0182);transform-origin:0 0;">megj</div>
<svg style="left:339px;top:960px" width="18" height="18"><circle cx="9" cy="9" r="7.6" fill="none" stroke="#777" stroke-width="1.2"/><path d="M9 4.5 V13.5 M4.5 9 H13.5" stroke="#777" stroke-width="1.4"/></svg>
<div style="left:1152px;top:965px;width:2px;height:2px;background:#A8A8A8;"></div>
<div style="left:1152px;top:969px;width:2px;height:2px;background:#A8A8A8;"></div>
<div style="left:1152px;top:973px;width:2px;height:2px;background:#A8A8A8;"></div>
<div style="left:1184px;top:962px;width:714px;height:14px;background:#DADADA;"></div>
<div style="left:1169px;top:962px;width:13px;height:13px;background:#fff;border:1px solid #C6C6C6"></div>
<div style="left:1184px;top:962px;width:635px;height:13px;background:#fff;border:1px solid #C6C6C6"></div>
<div style="left:1882px;top:962px;width:13px;height:13px;background:#fff;border:1px solid #C6C6C6"></div>
<svg style="left:1173px;top:965px" width="6" height="9"><polygon points="5,0.5 5,8.5 0.5,4.5" fill="#666"/></svg>
<svg style="left:1887px;top:965px" width="6" height="9"><polygon points="0.5,0.5 0.5,8.5 5,4.5" fill="#666"/></svg>
<div class="t" style="left:8.3px;top:987.54px;font-size:12px;color:#444;font-weight:normal;transform:scaleX(0.8023);transform-origin:0 0;">Kész</div>
<div class="t" style="left:53.4px;top:987.54px;font-size:12px;color:#444;font-weight:normal;transform:scaleX(0.8655);transform-origin:0 0;">Számolás</div>
<div style="left:1620px;top:984px;width:40px;height:21px;background:#D1D1D1;"></div>
<svg style="left:1633px;top:987px" width="14" height="13"><path d="M0.5 0.5 H13.5 V12.5 H0.5 Z" fill="none" stroke="#444" stroke-width="1"/><path d="M4.8 0.5 V12.5 M9.2 0.5 V12.5 M0.5 4.5 H13.5 M0.5 8.5 H13.5" stroke="#444" stroke-width="1.6"/></svg>
<svg style="left:1673px;top:987px" width="15" height="13"><rect x="0.5" y="0.5" width="13" height="12" fill="none" stroke="#444" stroke-width="1"/><rect x="3.5" y="2.5" width="7" height="8" fill="none" stroke="#444" stroke-width="1"/><path d="M5 4.5 H9 M5 6.5 H9 M5 8.5 H9" stroke="#444" stroke-width="1"/></svg>
<svg style="left:1713px;top:987px" width="16" height="13"><path d="M0.5 0.5 H13.5 V12.5 H0.5 Z M0.5 7.5 H9.5 V0.5 M4.5 0.5 V7.5" fill="none" stroke="#444" stroke-width="1"/></svg>
<div style="left:1746px;top:993px;width:8px;height:1px;background:#444;"></div>
<div style="left:1759px;top:994px;width:100px;height:1px;background:#B4B4B4;"></div>
<div style="left:1808px;top:989px;width:4px;height:11px;background:#777;"></div>
<div style="left:1864px;top:993px;width:8px;height:1px;background:#444;"></div>
<div style="left:1867.5px;top:989.5px;width:1px;height:8px;background:#444;"></div>
<div class="t" style="left:1885.5px;top:988.64px;font-size:12px;color:#444;font-weight:normal;transform:scaleX(0.8310);transform-origin:0 0;">100%</div>
<div style="left:26px;top:232px;width:1873px;height:723px;background:#fff;"></div>
<div style="left:26px;top:251px;width:1873px;height:1px;background:#A6A6A6;"></div>
<div style="left:26px;top:271px;width:1873px;height:1px;background:#DADADA;"></div>
<div style="left:26px;top:291px;width:1873px;height:1px;background:#DADADA;"></div>
<div style="left:26px;top:311px;width:1873px;height:1px;background:#DADADA;"></div>
<div style="left:26px;top:331px;width:1873px;height:1px;background:#DADADA;"></div>
<div style="left:26px;top:351px;width:1873px;height:1px;background:#DADADA;"></div>
<div style="left:26px;top:371px;width:1873px;height:1px;background:#DADADA;"></div>
<div style="left:26px;top:391px;width:1873px;height:1px;background:#DADADA;"></div>
<div style="left:26px;top:411px;width:1873px;height:1px;background:#DADADA;"></div>
<div style="left:26px;top:431px;width:1873px;height:1px;background:#DADADA;"></div>
<div style="left:26px;top:451px;width:1873px;height:1px;background:#DADADA;"></div>
<div style="left:26px;top:471px;width:1873px;height:1px;background:#DADADA;"></div>
<div style="left:26px;top:491px;width:1873px;height:1px;background:#DADADA;"></div>
<div style="left:26px;top:511px;width:1873px;height:1px;background:#DADADA;"></div>
<div style="left:26px;top:531px;width:1873px;height:1px;background:#DADADA;"></div>
<div style="left:26px;top:551px;width:1873px;height:1px;background:#DADADA;"></div>
<div style="left:26px;top:571px;width:1873px;height:1px;background:#DADADA;"></div>
<div style="left:26px;top:591px;width:1873px;height:1px;background:#DADADA;"></div>
<div style="left:26px;top:611px;width:1873px;height:1px;background:#DADADA;"></div>
<div style="left:26px;top:631px;width:1873px;height:1px;background:#DADADA;"></div>
<div style="left:26px;top:651px;width:1873px;height:1px;background:#DADADA;"></div>
<div style="left:26px;top:671px;width:1873px;height:1px;background:#DADADA;"></div>
<div style="left:26px;top:691px;width:1873px;height:1px;background:#DADADA;"></div>
<div style="left:26px;top:711px;width:1873px;height:1px;background:#DADADA;"></div>
<div style="left:26px;top:731px;width:1873px;height:1px;background:#DADADA;"></div>
<div style="left:26px;top:751px;width:1873px;height:1px;background:#DADADA;"></div>
<div style="left:26px;top:771px;width:1873px;height:1px;background:#DADADA;"></div>
<div style="left:26px;top:791px;width:1873px;height:1px;background:#DADADA;"></div>
<div style="left:26px;top:811px;width:1873px;height:1px;background:#DADADA;"></div>
<div style="left:26px;top:831px;width:1873px;height:1px;background:#DADADA;"></div>
<div style="left:26px;top:851px;width:1873px;height:1px;background:#DADADA;"></div>
<div style="left:26px;top:871px;width:1873px;height:1px;background:#DADADA;"></div>
<div style="left:26px;top:891px;width:1873px;height:1px;background:#DADADA;"></div>
<div style="left:26px;top:911px;width:1873px;height:1px;background:#DADADA;"></div>
<div style="left:26px;top:931px;width:1873px;height:1px;background:#DADADA;"></div>
<div style="left:26px;top:951px;width:1873px;height:1px;background:#DADADA;"></div>
<div style="left:223px;top:232px;width:1px;height:723px;background:#A6A6A6;"></div>
<div style="left:311px;top:232px;width:1px;height:723px;background:#DADADA;"></div>
<div style="left:363px;top:232px;width:1px;height:723px;background:#DADADA;"></div>
<div style="left:463px;top:232px;width:1px;height:723px;background:#DADADA;"></div>
<div style="left:570px;top:232px;width:1px;height:723px;background:#DADADA;"></div>
<div style="left:671px;top:232px;width:1px;height:723px;background:#DADADA;"></div>
<div style="left:747px;top:232px;width:1px;height:723px;background:#DADADA;"></div>
<div style="left:854px;top:232px;width:1px;height:723px;background:#DADADA;"></div>
<div style="left:955px;top:232px;width:1px;height:723px;background:#DADADA;"></div>
<div style="left:1057px;top:232px;width:1px;height:723px;background:#DADADA;"></div>
<div style="left:1160px;top:232px;width:1px;height:723px;background:#DADADA;"></div>
<div style="left:1236px;top:232px;width:1px;height:723px;background:#DADADA;"></div>
<div style="left:1278px;top:232px;width:1px;height:723px;background:#DADADA;"></div>
<div style="left:1341px;top:232px;width:1px;height:723px;background:#DADADA;"></div>
<div style="left:1434px;top:232px;width:1px;height:723px;background:#DADADA;"></div>
<div style="left:1492px;top:232px;width:1px;height:723px;background:#DADADA;"></div>
<div style="left:1541px;top:232px;width:1px;height:723px;background:#DADADA;"></div>
<div style="left:1590px;top:232px;width:1px;height:723px;background:#DADADA;"></div>
<div style="left:1640px;top:232px;width:1px;height:723px;background:#DADADA;"></div>
<div style="left:1721px;top:232px;width:1px;height:723px;background:#DADADA;"></div>
<div style="left:1793px;top:232px;width:1px;height:723px;background:#DADADA;"></div>
<div style="left:1879px;top:232px;width:1px;height:723px;background:#DADADA;"></div>
<div style="left:463px;top:232px;width:284px;height:723px;background:#CCFFFF;"></div>
<div style="left:955px;top:232px;width:103px;height:723px;background:#fff;"></div>
<div style="left:1160px;top:232px;width:77px;height:723px;background:#fff;"></div>
<div style="left:1793px;top:312px;width:1px;height:19px;background:#fff;"></div>
<div style="left:1793px;top:332px;width:1px;height:19px;background:#fff;"></div>
<div style="left:1793px;top:372px;width:1px;height:19px;background:#fff;"></div>
<div style="left:1793px;top:392px;width:1px;height:19px;background:#fff;"></div>
<div style="left:26px;top:251px;width:1873px;height:1px;background:#A6A6A6;"></div>
<div style="left:0px;top:212px;width:1899px;height:19px;background:#E6E6E6;"></div>
<div style="left:0px;top:231px;width:1899px;height:1px;background:#A6A6A6;"></div>
<div style="left:0px;top:232px;width:25px;height:723px;background:#E6E6E6;"></div>
<div style="left:25px;top:212px;width:1px;height:743px;background:#A6A6A6;"></div>
<svg style="left:10px;top:216px" width="12" height="12"><polygon points="11,0 11,11 0,11" fill="#B9B9B9"/></svg>
<div style="left:223px;top:212px;width:1px;height:19px;background:#C6C6C6;"></div>
<div style="left:311px;top:212px;width:1px;height:19px;background:#C6C6C6;"></div>
<div style="left:363px;top:212px;width:1px;height:19px;background:#C6C6C6;"></div>
<div style="left:463px;top:212px;width:1px;height:19px;background:#C6C6C6;"></div>
<div style="left:570px;top:212px;width:1px;height:19px;background:#C6C6C6;"></div>
<div style="left:671px;top:212px;width:1px;height:19px;background:#C6C6C6;"></div>
<div style="left:747px;top:212px;width:1px;height:19px;background:#C6C6C6;"></div>
<div style="left:854px;top:212px;width:1px;height:19px;background:#C6C6C6;"></div>
<div style="left:955px;top:212px;width:1px;height:19px;background:#C6C6C6;"></div>
<div style="left:1057px;top:212px;width:1px;height:19px;background:#C6C6C6;"></div>
<div style="left:1160px;top:212px;width:1px;height:19px;background:#C6C6C6;"></div>
<div style="left:1236px;top:212px;width:1px;height:19px;background:#C6C6C6;"></div>
<div style="left:1278px;top:212px;width:1px;height:19px;background:#C6C6C6;"></div>
<div style="left:1341px;top:212px;width:1px;height:19px;background:#C6C6C6;"></div>
<div style="left:1434px;top:212px;width:1px;height:19px;background:#C6C6C6;"></div>
<div style="left:1492px;top:212px;width:1px;height:19px;background:#C6C6C6;"></div>
<div style="left:1541px;top:212px;width:1px;height:19px;background:#C6C6C6;"></div>
<div style="left:1590px;top:212px;width:1px;height:19px;background:#C6C6C6;"></div>
<div style="left:1640px;top:212px;width:1px;height:19px;background:#C6C6C6;"></div>
<div style="left:1721px;top:212px;width:1px;height:19px;background:#C6C6C6;"></div>
<div style="left:1793px;top:212px;width:1px;height:19px;background:#C6C6C6;"></div>
<div style="left:1879px;top:212px;width:1px;height:19px;background:#C6C6C6;"></div>
<div style="left:1057px;top:212px;width:103px;height:19px;background:#D2D2D2;"></div>
<div style="left:1160px;top:212px;width:1px;height:19px;background:#ABABAB;"></div>
<div style="left:1057px;top:229px;width:104px;height:2px;background:#0D6E38;"></div>
<div class="t" style="left:120.1640625px;top:214.24px;font-size:13px;color:#1A1A1A;font-weight:normal;">A</div>
<div class="t" style="left:263.1640625px;top:214.24px;font-size:13px;color:#1A1A1A;font-weight:normal;">B</div>
<div class="t" style="left:332.8046875px;top:214.24px;font-size:13px;color:#1A1A1A;font-weight:normal;">C</div>
<div class="t" style="left:408.8046875px;top:214.24px;font-size:13px;color:#1A1A1A;font-weight:normal;">D</div>
<div class="t" style="left:512.6640625px;top:214.24px;font-size:13px;color:#1A1A1A;font-weight:normal;">E</div>
<div class="t" style="left:617.03125px;top:214.24px;font-size:13px;color:#1A1A1A;font-weight:normal;">F</div>
<div class="t" style="left:704.4453125px;top:214.24px;font-size:13px;color:#1A1A1A;font-weight:normal;">G</div>
<div class="t" style="left:796.3046875px;top:214.24px;font-size:13px;color:#1A1A1A;font-weight:normal;">H</div>
<div class="t" style="left:903.1953125px;top:214.24px;font-size:13px;color:#1A1A1A;font-weight:normal;">I</div>
<div class="t" style="left:1003.25px;top:214.24px;font-size:13px;color:#1A1A1A;font-weight:normal;">J</div>
<div class="t" style="left:1104.6640625px;top:214.24px;font-size:13px;color:#0E5C2F;font-weight:normal;">K</div>
<div class="t" style="left:1194.8828125px;top:214.24px;font-size:13px;color:#1A1A1A;font-weight:normal;">L</div>
<div class="t" style="left:1252.0859375px;top:214.24px;font-size:13px;color:#1A1A1A;font-weight:normal;">M</div>
<div class="t" style="left:1305.3046875px;top:214.24px;font-size:13px;color:#1A1A1A;font-weight:normal;">N</div>
<div class="t" style="left:1382.9453125px;top:214.24px;font-size:13px;color:#1A1A1A;font-weight:normal;">O</div>
<div class="t" style="left:1459.1640625px;top:214.24px;font-size:13px;color:#1A1A1A;font-weight:normal;">P</div>
<div class="t" style="left:1511.9453125px;top:214.24px;font-size:13px;color:#1A1A1A;font-weight:normal;">Q</div>
<div class="t" style="left:1561.3046875px;top:214.24px;font-size:13px;color:#1A1A1A;font-weight:normal;">R</div>
<div class="t" style="left:1611.1640625px;top:214.24px;font-size:13px;color:#1A1A1A;font-weight:normal;">S</div>
<div class="t" style="left:1677.03125px;top:214.24px;font-size:13px;color:#1A1A1A;font-weight:normal;">T</div>
<div class="t" style="left:1752.8046875px;top:214.24px;font-size:13px;color:#1A1A1A;font-weight:normal;">U</div>
<div class="t" style="left:1832.1640625px;top:214.24px;font-size:13px;color:#1A1A1A;font-weight:normal;">V</div>
<div style="left:0px;top:251px;width:25px;height:1px;background:#BEBEBE;"></div>
<div class="t" style="left:9.3828125px;top:235.24px;font-size:13px;color:#1A1A1A;font-weight:normal;">1</div>
<div style="left:0px;top:271px;width:25px;height:1px;background:#BEBEBE;"></div>
<div class="t" style="left:9.3828125px;top:255.24px;font-size:13px;color:#1A1A1A;font-weight:normal;">8</div>
<div style="left:0px;top:291px;width:25px;height:1px;background:#BEBEBE;"></div>
<div class="t" style="left:9.3828125px;top:275.24px;font-size:13px;color:#1A1A1A;font-weight:normal;">9</div>
<div style="left:0px;top:311px;width:25px;height:1px;background:#BEBEBE;"></div>
<div class="t" style="left:5.765625px;top:295.24px;font-size:13px;color:#1A1A1A;font-weight:normal;">10</div>
<div style="left:0px;top:331px;width:25px;height:1px;background:#BEBEBE;"></div>
<div class="t" style="left:6.25px;top:315.24px;font-size:13px;color:#1A1A1A;font-weight:normal;">11</div>
<div style="left:0px;top:351px;width:25px;height:1px;background:#BEBEBE;"></div>
<div class="t" style="left:5.765625px;top:335.24px;font-size:13px;color:#1A1A1A;font-weight:normal;">12</div>
<div style="left:0px;top:371px;width:25px;height:1px;background:#BEBEBE;"></div>
<div class="t" style="left:5.765625px;top:355.24px;font-size:13px;color:#1A1A1A;font-weight:normal;">13</div>
<div style="left:0px;top:391px;width:25px;height:1px;background:#BEBEBE;"></div>
<div class="t" style="left:5.765625px;top:375.24px;font-size:13px;color:#1A1A1A;font-weight:normal;">14</div>
<div style="left:0px;top:411px;width:25px;height:1px;background:#BEBEBE;"></div>
<div class="t" style="left:5.765625px;top:395.24px;font-size:13px;color:#1A1A1A;font-weight:normal;">15</div>
<div style="left:0px;top:431px;width:25px;height:1px;background:#BEBEBE;"></div>
<div class="t" style="left:5.765625px;top:415.24px;font-size:13px;color:#1A1A1A;font-weight:normal;">16</div>
<div style="left:0px;top:451px;width:25px;height:1px;background:#BEBEBE;"></div>
<div class="t" style="left:5.765625px;top:435.24px;font-size:13px;color:#1A1A1A;font-weight:normal;">17</div>
<div style="left:0px;top:471px;width:25px;height:1px;background:#BEBEBE;"></div>
<div class="t" style="left:5.765625px;top:455.24px;font-size:13px;color:#1A1A1A;font-weight:normal;">18</div>
<div style="left:0px;top:491px;width:25px;height:1px;background:#BEBEBE;"></div>
<div class="t" style="left:5.765625px;top:475.24px;font-size:13px;color:#1A1A1A;font-weight:normal;">19</div>
<div style="left:0px;top:511px;width:25px;height:1px;background:#BEBEBE;"></div>
<div class="t" style="left:5.765625px;top:495.24px;font-size:13px;color:#1A1A1A;font-weight:normal;">20</div>
<div style="left:0px;top:531px;width:25px;height:1px;background:#BEBEBE;"></div>
<div class="t" style="left:5.765625px;top:515.24px;font-size:13px;color:#1A1A1A;font-weight:normal;">21</div>
<div style="left:0px;top:551px;width:25px;height:1px;background:#BEBEBE;"></div>
<div class="t" style="left:5.765625px;top:535.24px;font-size:13px;color:#1A1A1A;font-weight:normal;">22</div>
<div style="left:0px;top:571px;width:25px;height:1px;background:#BEBEBE;"></div>
<div class="t" style="left:5.765625px;top:555.24px;font-size:13px;color:#1A1A1A;font-weight:normal;">23</div>
<div style="left:0px;top:591px;width:25px;height:1px;background:#BEBEBE;"></div>
<div class="t" style="left:5.765625px;top:575.24px;font-size:13px;color:#1A1A1A;font-weight:normal;">24</div>
<div style="left:0px;top:611px;width:25px;height:1px;background:#BEBEBE;"></div>
<div style="left:0px;top:591px;width:24px;height:21px;background:#D2D2D2;"></div>
<div style="left:0px;top:591px;width:24px;height:1px;background:#ABABAB;"></div>
<div style="left:0px;top:611px;width:24px;height:1px;background:#ABABAB;"></div>
<div style="left:24px;top:591px;width:2px;height:21px;background:#0D6E38;"></div>
<div class="t" style="left:5.765625px;top:595.24px;font-size:13px;color:#0E5C2F;font-weight:normal;">25</div>
<div style="left:0px;top:631px;width:25px;height:1px;background:#BEBEBE;"></div>
<div class="t" style="left:5.765625px;top:615.24px;font-size:13px;color:#1A1A1A;font-weight:normal;">26</div>
<div style="left:0px;top:651px;width:25px;height:1px;background:#BEBEBE;"></div>
<div class="t" style="left:5.765625px;top:635.24px;font-size:13px;color:#1A1A1A;font-weight:normal;">27</div>
<div style="left:0px;top:671px;width:25px;height:1px;background:#BEBEBE;"></div>
<div class="t" style="left:5.765625px;top:655.24px;font-size:13px;color:#1A1A1A;font-weight:normal;">28</div>
<div style="left:0px;top:691px;width:25px;height:1px;background:#BEBEBE;"></div>
<div class="t" style="left:5.765625px;top:675.24px;font-size:13px;color:#1A1A1A;font-weight:normal;">29</div>
<div style="left:0px;top:711px;width:25px;height:1px;background:#BEBEBE;"></div>
<div class="t" style="left:5.765625px;top:695.24px;font-size:13px;color:#1A1A1A;font-weight:normal;">30</div>
<div style="left:0px;top:731px;width:25px;height:1px;background:#BEBEBE;"></div>
<div class="t" style="left:5.765625px;top:715.24px;font-size:13px;color:#1A1A1A;font-weight:normal;">31</div>
<div style="left:0px;top:751px;width:25px;height:1px;background:#BEBEBE;"></div>
<div class="t" style="left:5.765625px;top:735.24px;font-size:13px;color:#1A1A1A;font-weight:normal;">32</div>
<div style="left:0px;top:771px;width:25px;height:1px;background:#BEBEBE;"></div>
<div class="t" style="left:5.765625px;top:755.24px;font-size:13px;color:#1A1A1A;font-weight:normal;">33</div>
<div style="left:0px;top:791px;width:25px;height:1px;background:#BEBEBE;"></div>
<div class="t" style="left:5.765625px;top:775.24px;font-size:13px;color:#1A1A1A;font-weight:normal;">34</div>
<div style="left:0px;top:811px;width:25px;height:1px;background:#BEBEBE;"></div>
<div class="t" style="left:5.765625px;top:795.24px;font-size:13px;color:#1A1A1A;font-weight:normal;">35</div>
<div style="left:0px;top:831px;width:25px;height:1px;background:#BEBEBE;"></div>
<div class="t" style="left:5.765625px;top:815.24px;font-size:13px;color:#1A1A1A;font-weight:normal;">36</div>
<div style="left:0px;top:851px;width:25px;height:1px;background:#BEBEBE;"></div>
<div class="t" style="left:5.765625px;top:835.24px;font-size:13px;color:#1A1A1A;font-weight:normal;">37</div>
<div style="left:0px;top:871px;width:25px;height:1px;background:#BEBEBE;"></div>
<div class="t" style="left:5.765625px;top:855.24px;font-size:13px;color:#1A1A1A;font-weight:normal;">38</div>
<div style="left:0px;top:891px;width:25px;height:1px;background:#BEBEBE;"></div>
<div class="t" style="left:5.765625px;top:875.24px;font-size:13px;color:#1A1A1A;font-weight:normal;">39</div>
<div style="left:0px;top:911px;width:25px;height:1px;background:#BEBEBE;"></div>
<div class="t" style="left:5.765625px;top:895.24px;font-size:13px;color:#1A1A1A;font-weight:normal;">40</div>
<div style="left:0px;top:931px;width:25px;height:1px;background:#BEBEBE;"></div>
<div class="t" style="left:5.765625px;top:915.24px;font-size:13px;color:#1A1A1A;font-weight:normal;">41</div>
<div style="left:0px;top:951px;width:25px;height:1px;background:#BEBEBE;"></div>
<div class="t" style="left:5.765625px;top:935.24px;font-size:13px;color:#1A1A1A;font-weight:normal;">42</div>
<div class="t" style="left:28px;top:235.24px;font-size:13px;color:#000;font-weight:bold;">projekt</div>
<div class="t" style="left:226px;top:235.24px;font-size:13px;color:#000;font-weight:bold;">épület</div>
<div class="t" style="left:314px;top:235.24px;font-size:13px;color:#000;font-weight:bold;">emelet</div>
<div class="t" style="left:366px;top:235.24px;font-size:13px;color:#000;font-weight:bold;">lakás</div>
<div class="t" style="left:466px;top:235.24px;font-size:13px;color:#00B050;font-weight:bold;">rögzítés_2019q1</div>
<div class="t" style="left:573px;top:235.24px;font-size:13px;color:#00B050;font-weight:bold;">státusz_2019q1</div>
<div class="t" style="left:674px;top:235.24px;font-size:13px;color:#00B050;font-weight:bold;">ár_2019q1</div>
<div class="t" style="left:750px;top:235.24px;font-size:13px;color:#000;font-weight:bold;">rögzítés_2018q4</div>
<div class="t" style="left:857px;top:235.24px;font-size:13px;color:#000;font-weight:bold;">státusz_2018q4</div>
<div class="t" style="left:958px;top:235.24px;font-size:13px;color:#000;font-weight:bold;">ár_2018q4</div>
<div class="t" style="left:1060px;top:235.24px;font-size:13px;color:#000;font-weight:bold;">rögzítés_utolsó</div>
<div class="t" style="left:1163px;top:235.24px;font-size:13px;color:#000;font-weight:bold;">ár_utolsó</div>
<div class="t" style="left:1239px;top:235.24px;font-size:13px;color:#000;font-weight:bold;">szoba</div>
<div class="t" style="left:1281px;top:235.24px;font-size:13px;color:#000;font-weight:bold;">félszoba</div>
<div class="t" style="left:1344px;top:235.24px;font-size:13px;color:#000;font-weight:bold;">számított_nm</div>
<div class="t" style="left:1437px;top:235.24px;font-size:13px;color:#000;font-weight:bold;">lakásnm</div>
<div class="t" style="left:1495px;top:235.24px;font-size:13px;color:#000;font-weight:bold;">terasz</div>
<div class="t" style="left:1544px;top:235.24px;font-size:13px;color:#000;font-weight:bold;">erkély</div>
<div class="t" style="left:1593px;top:235.24px;font-size:13px;color:#000;font-weight:bold;">kert</div>
<div class="t" style="left:1643px;top:235.24px;font-size:13px;color:#000;font-weight:bold;">tároló</div>
<div class="t" style="left:1724px;top:235.24px;font-size:13px;color:#000;font-weight:bold;">parkoló</div>
<div class="t" style="left:1796px;top:235.24px;font-size:13px;color:#000;font-weight:bold;">tájolás</div>
<div class="t" style="left:1882px;top:235.24px;font-size:13px;color:#000;font-weight:bold;width:17px;overflow:hidden;">felszoba</div>
<div class="t" style="left:28px;top:255.24px;font-size:13px;color:#000;font-weight:normal;letter-spacing:0.6px;">Mintaprojekt 1</div>
<div class="t" style="right:1559px;top:255.24px;font-size:13px;color:#000;font-weight:normal;">2</div>
<div class="t" style="right:1459px;top:255.24px;font-size:13px;color:#000;font-weight:normal;">4</div>
<div class="t" style="right:1352px;top:255.24px;font-size:13px;color:#00B050;font-weight:bold;">2019.02.12</div>
<div class="t" style="left:573px;top:255.24px;font-size:13px;color:#00B050;font-weight:bold;">eladva</div>
<div class="t" style="right:1068px;top:255.24px;font-size:13px;color:#000;font-weight:normal;">2018.11.12</div>
<div class="t" style="left:857px;top:255.24px;font-size:13px;color:#000;font-weight:normal;">eladva</div>
<div class="t" style="right:762px;top:255.24px;font-size:13px;color:#000;font-weight:normal;">2018.08.16</div>
<div class="t" style="right:686px;top:255.24px;font-size:13px;color:#000;font-weight:normal;">34 790 000</div>
<div class="t" style="right:644px;top:255.24px;font-size:13px;color:#000;font-weight:normal;">2</div>
<div class="t" style="right:581px;top:255.24px;font-size:13px;color:#000;font-weight:normal;">1</div>
<div class="t" style="right:488px;top:255.24px;font-size:13px;color:#000;font-weight:normal;">73</div>
<div class="t" style="right:430px;top:255.24px;font-size:13px;color:#000;font-weight:normal;">62</div>
<div class="t" style="right:381px;top:255.24px;font-size:13px;color:#000;font-weight:normal;">20</div>
<div class="t" style="right:332px;top:255.24px;font-size:13px;color:#000;font-weight:normal;">3</div>
<div class="t" style="left:28px;top:275.24px;font-size:13px;color:#000;font-weight:normal;letter-spacing:0.6px;">Mintaprojekt 1</div>
<div class="t" style="right:1559px;top:275.24px;font-size:13px;color:#000;font-weight:normal;">3</div>
<div class="t" style="right:1459px;top:275.24px;font-size:13px;color:#000;font-weight:normal;">5</div>
<div class="t" style="right:1352px;top:275.24px;font-size:13px;color:#00B050;font-weight:bold;">2019.02.12</div>
<div class="t" style="left:573px;top:275.24px;font-size:13px;color:#00B050;font-weight:bold;">eladva</div>
<div class="t" style="right:1068px;top:275.24px;font-size:13px;color:#000;font-weight:normal;">2018.11.12</div>
<div class="t" style="left:857px;top:275.24px;font-size:13px;color:#000;font-weight:normal;">eladva</div>
<div class="t" style="right:762px;top:275.24px;font-size:13px;color:#000;font-weight:normal;">2018.08.16</div>
<div class="t" style="right:686px;top:275.24px;font-size:13px;color:#000;font-weight:normal;">39 990 000</div>
<div class="t" style="right:644px;top:275.24px;font-size:13px;color:#000;font-weight:normal;">3</div>
<div class="t" style="right:488px;top:275.24px;font-size:13px;color:#000;font-weight:normal;">79</div>
<div class="t" style="right:430px;top:275.24px;font-size:13px;color:#000;font-weight:normal;">74,5</div>
<div class="t" style="right:381px;top:275.24px;font-size:13px;color:#000;font-weight:normal;">9</div>
<div class="t" style="left:28px;top:295.24px;font-size:13px;color:#000;font-weight:normal;letter-spacing:0.6px;">Mintaprojekt 1</div>
<div class="t" style="right:1559px;top:295.24px;font-size:13px;color:#000;font-weight:normal;">3</div>
<div class="t" style="right:1459px;top:295.24px;font-size:13px;color:#000;font-weight:normal;">6</div>
<div class="t" style="right:1352px;top:295.24px;font-size:13px;color:#00B050;font-weight:bold;">2019.02.12</div>
<div class="t" style="left:573px;top:295.24px;font-size:13px;color:#00B050;font-weight:bold;">szabad</div>
<div class="t" style="right:1175px;top:295.24px;font-size:13px;color:#00B050;font-weight:bold;">41 490 000</div>
<div class="t" style="right:1068px;top:295.24px;font-size:13px;color:#000;font-weight:normal;">2018.11.12</div>
<div class="t" style="left:857px;top:295.24px;font-size:13px;color:#000;font-weight:normal;">szabad</div>
<div class="t" style="right:885px;top:295.24px;font-size:13px;color:#000;font-weight:normal;">41 490 000</div>
<div class="t" style="right:762px;top:295.24px;font-size:13px;color:#000;font-weight:normal;">2019.02.12</div>
<div class="t" style="right:686px;top:295.24px;font-size:13px;color:#000;font-weight:normal;">41 490 000</div>
<div class="t" style="right:644px;top:295.24px;font-size:13px;color:#000;font-weight:normal;">2</div>
<div class="t" style="right:581px;top:295.24px;font-size:13px;color:#000;font-weight:normal;">1</div>
<div class="t" style="right:488px;top:295.24px;font-size:13px;color:#000;font-weight:normal;">79</div>
<div class="t" style="right:430px;top:295.24px;font-size:13px;color:#000;font-weight:normal;">72</div>
<div class="t" style="right:381px;top:295.24px;font-size:13px;color:#000;font-weight:normal;">14</div>
<div class="t" style="left:28px;top:315.24px;font-size:13px;color:#000;font-weight:normal;letter-spacing:0.6px;">Mintaprojekt 2</div>
<div class="t" style="left:226px;top:315.24px;font-size:13px;color:#000;font-weight:normal;">A</div>
<div class="t" style="right:1559px;top:315.24px;font-size:13px;color:#000;font-weight:normal;">0,5</div>
<div class="t" style="right:1459px;top:315.24px;font-size:13px;color:#000;font-weight:normal;">1</div>
<div class="t" style="right:1352px;top:315.24px;font-size:13px;color:#00B050;font-weight:bold;">2019.02.12</div>
<div class="t" style="left:573px;top:315.24px;font-size:13px;color:#00B050;font-weight:bold;">eladva</div>
<div class="t" style="right:1068px;top:315.24px;font-size:13px;color:#000;font-weight:normal;">2018.11.12</div>
<div class="t" style="left:857px;top:315.24px;font-size:13px;color:#000;font-weight:normal;">eladva</div>
<div class="t" style="right:762px;top:315.24px;font-size:13px;color:#000;font-weight:normal;">2018.05.31</div>
<div class="t" style="right:686px;top:315.24px;font-size:13px;color:#000;font-weight:normal;">62 000 000</div>
<div class="t" style="right:644px;top:315.24px;font-size:13px;color:#000;font-weight:normal;">3</div>
<div class="t" style="right:581px;top:315.24px;font-size:13px;color:#000;font-weight:normal;">1</div>
<div class="t" style="right:488px;top:315.24px;font-size:13px;color:#000;font-weight:normal;">106,965</div>
<div class="t" style="right:430px;top:315.24px;font-size:13px;color:#000;font-weight:normal;">97,78</div>
<div class="t" style="right:381px;top:315.24px;font-size:13px;color:#000;font-weight:normal;">13,14</div>
<div class="t" style="right:332px;top:315.24px;font-size:13px;color:#000;font-weight:normal;">5,23</div>
<div class="t" style="right:282px;top:315.24px;font-size:13px;color:#000;font-weight:normal;">184</div>
<div class="t" style="left:1724px;top:315.24px;font-size:13px;color:#000;font-weight:normal;">20 nm garázs az árban</div>
<div class="t" style="left:28px;top:335.24px;font-size:13px;color:#000;font-weight:normal;letter-spacing:0.6px;">Mintaprojekt 2</div>
<div class="t" style="left:226px;top:335.24px;font-size:13px;color:#000;font-weight:normal;">A</div>
<div class="t" style="right:1559px;top:335.24px;font-size:13px;color:#000;font-weight:normal;">0,5</div>
<div class="t" style="right:1459px;top:335.24px;font-size:13px;color:#000;font-weight:normal;">2</div>
<div class="t" style="right:1352px;top:335.24px;font-size:13px;color:#00B050;font-weight:bold;">2019.02.12</div>
<div class="t" style="left:573px;top:335.24px;font-size:13px;color:#00B050;font-weight:bold;">szabad</div>
<div class="t" style="right:1175px;top:335.24px;font-size:13px;color:#00B050;font-weight:bold;">70 000 000</div>
<div class="t" style="right:1068px;top:335.24px;font-size:13px;color:#000;font-weight:normal;">2018.11.12</div>
<div class="t" style="left:857px;top:335.24px;font-size:13px;color:#000;font-weight:normal;">szabad</div>
<div class="t" style="right:885px;top:335.24px;font-size:13px;color:#000;font-weight:normal;">67 000 000</div>
<div class="t" style="right:762px;top:335.24px;font-size:13px;color:#000;font-weight:normal;">2019.02.12</div>
<div class="t" style="right:686px;top:335.24px;font-size:13px;color:#000;font-weight:normal;">70 000 000</div>
<div class="t" style="right:644px;top:335.24px;font-size:13px;color:#000;font-weight:normal;">3</div>
<div class="t" style="right:581px;top:335.24px;font-size:13px;color:#000;font-weight:normal;">1</div>
<div class="t" style="right:488px;top:335.24px;font-size:13px;color:#000;font-weight:normal;">108,5233333</div>
<div class="t" style="right:430px;top:335.24px;font-size:13px;color:#000;font-weight:normal;">97,78</div>
<div class="t" style="right:381px;top:335.24px;font-size:13px;color:#000;font-weight:normal;">17</div>
<div class="t" style="right:332px;top:335.24px;font-size:13px;color:#000;font-weight:normal;">5,23</div>
<div class="t" style="right:282px;top:335.24px;font-size:13px;color:#000;font-weight:normal;">184</div>
<div class="t" style="left:1724px;top:335.24px;font-size:13px;color:#000;font-weight:normal;">20 nm garázs az árban</div>
<div class="t" style="left:28px;top:355.24px;font-size:13px;color:#000;font-weight:normal;letter-spacing:0.6px;">Mintaprojekt 2</div>
<div class="t" style="left:226px;top:355.24px;font-size:13px;color:#000;font-weight:normal;">A</div>
<div class="t" style="right:1559px;top:355.24px;font-size:13px;color:#000;font-weight:normal;">0,5</div>
<div class="t" style="right:1459px;top:355.24px;font-size:13px;color:#000;font-weight:normal;">3</div>
<div class="t" style="right:1352px;top:355.24px;font-size:13px;color:#00B050;font-weight:bold;">2019.02.12</div>
<div class="t" style="left:573px;top:355.24px;font-size:13px;color:#00B050;font-weight:bold;">eladva</div>
<div class="t" style="right:1068px;top:355.24px;font-size:13px;color:#000;font-weight:normal;">2018.11.12</div>
<div class="t" style="left:857px;top:355.24px;font-size:13px;color:#000;font-weight:normal;">eladva</div>
<div class="t" style="right:762px;top:355.24px;font-size:13px;color:#000;font-weight:normal;">2017.05.19</div>
<div class="t" style="right:686px;top:355.24px;font-size:13px;color:#000;font-weight:normal;">53 754 000</div>
<div class="t" style="right:644px;top:355.24px;font-size:13px;color:#000;font-weight:normal;">3</div>
<div class="t" style="right:581px;top:355.24px;font-size:13px;color:#000;font-weight:normal;">1</div>
<div class="t" style="right:488px;top:355.24px;font-size:13px;color:#000;font-weight:normal;">126,46</div>
<div class="t" style="right:430px;top:355.24px;font-size:13px;color:#000;font-weight:normal;">116,79</div>
<div class="t" style="right:381px;top:355.24px;font-size:13px;color:#000;font-weight:normal;">8,12</div>
<div class="t" style="right:332px;top:355.24px;font-size:13px;color:#000;font-weight:normal;">11,22</div>
<div class="t" style="left:28px;top:375.24px;font-size:13px;color:#000;font-weight:normal;letter-spacing:0.6px;">Mintaprojekt 2</div>
<div class="t" style="left:226px;top:375.24px;font-size:13px;color:#000;font-weight:normal;">B</div>
<div class="t" style="right:1559px;top:375.24px;font-size:13px;color:#000;font-weight:normal;">0,5</div>
<div class="t" style="right:1459px;top:375.24px;font-size:13px;color:#000;font-weight:normal;">1</div>
<div class="t" style="right:1352px;top:375.24px;font-size:13px;color:#00B050;font-weight:bold;">2019.02.12</div>
<div class="t" style="left:573px;top:375.24px;font-size:13px;color:#00B050;font-weight:bold;">szabad</div>
<div class="t" style="right:1175px;top:375.24px;font-size:13px;color:#00B050;font-weight:bold;">70 000 000</div>
<div class="t" style="right:1068px;top:375.24px;font-size:13px;color:#000;font-weight:normal;">2018.11.12</div>
<div class="t" style="left:857px;top:375.24px;font-size:13px;color:#000;font-weight:normal;">szabad</div>
<div class="t" style="right:885px;top:375.24px;font-size:13px;color:#000;font-weight:normal;">66 000 000</div>
<div class="t" style="right:762px;top:375.24px;font-size:13px;color:#000;font-weight:normal;">2019.02.12</div>
<div class="t" style="right:686px;top:375.24px;font-size:13px;color:#000;font-weight:normal;">70 000 000</div>
<div class="t" style="right:644px;top:375.24px;font-size:13px;color:#000;font-weight:normal;">2</div>
<div class="t" style="right:581px;top:375.24px;font-size:13px;color:#000;font-weight:normal;">2</div>
<div class="t" style="right:488px;top:375.24px;font-size:13px;color:#000;font-weight:normal;">103,405</div>
<div class="t" style="right:430px;top:375.24px;font-size:13px;color:#000;font-weight:normal;">97,63</div>
<div class="t" style="right:381px;top:375.24px;font-size:13px;color:#000;font-weight:normal;">6,6</div>
<div class="t" style="right:332px;top:375.24px;font-size:13px;color:#000;font-weight:normal;">4,95</div>
<div class="t" style="right:282px;top:375.24px;font-size:13px;color:#000;font-weight:normal;">241</div>
<div class="t" style="left:1724px;top:375.24px;font-size:13px;color:#000;font-weight:normal;">17 nm garázs az árban</div>
<div class="t" style="left:28px;top:395.24px;font-size:13px;color:#000;font-weight:normal;letter-spacing:0.6px;">Mintaprojekt 2</div>
<div class="t" style="left:226px;top:395.24px;font-size:13px;color:#000;font-weight:normal;">B</div>
<div class="t" style="right:1559px;top:395.24px;font-size:13px;color:#000;font-weight:normal;">0,5</div>
<div class="t" style="right:1459px;top:395.24px;font-size:13px;color:#000;font-weight:normal;">2</div>
<div class="t" style="right:1352px;top:395.24px;font-size:13px;color:#00B050;font-weight:bold;">2019.02.12</div>
<div class="t" style="left:573px;top:395.24px;font-size:13px;color:#00B050;font-weight:bold;">szabad</div>
<div class="t" style="right:1175px;top:395.24px;font-size:13px;color:#00B050;font-weight:bold;">70 000 000</div>
<div class="t" style="right:1068px;top:395.24px;font-size:13px;color:#000;font-weight:normal;">2018.11.12</div>
<div class="t" style="left:857px;top:395.24px;font-size:13px;color:#000;font-weight:normal;">szabad</div>
<div class="t" style="right:885px;top:395.24px;font-size:13px;color:#000;font-weight:normal;">66 000 000</div>
<div class="t" style="right:762px;top:395.24px;font-size:13px;color:#000;font-weight:normal;">2019.02.12</div>
<div class="t" style="right:686px;top:395.24px;font-size:13px;color:#000;font-weight:normal;">70 000 000</div>
<div class="t" style="right:644px;top:395.24px;font-size:13px;color:#000;font-weight:normal;">2</div>
<div class="t" style="right:581px;top:395.24px;font-size:13px;color:#000;font-weight:normal;">2</div>
<div class="t" style="right:488px;top:395.24px;font-size:13px;color:#000;font-weight:normal;">104,755</div>
<div class="t" style="right:430px;top:395.24px;font-size:13px;color:#000;font-weight:normal;">98,98</div>
<div class="t" style="right:381px;top:395.24px;font-size:13px;color:#000;font-weight:normal;">6,6</div>
<div class="t" style="right:332px;top:395.24px;font-size:13px;color:#000;font-weight:normal;">4,95</div>
<div class="t" style="right:282px;top:395.24px;font-size:13px;color:#000;font-weight:normal;">160</div>
<div class="t" style="left:1724px;top:395.24px;font-size:13px;color:#000;font-weight:normal;">18 nm garázs az árban</div>
<div class="t" style="left:28px;top:415.24px;font-size:13px;color:#000;font-weight:normal;letter-spacing:0.6px;">Mintaprojekt 2</div>
<div class="t" style="left:226px;top:415.24px;font-size:13px;color:#000;font-weight:normal;">B</div>
<div class="t" style="right:1559px;top:415.24px;font-size:13px;color:#000;font-weight:normal;">0,5</div>
<div class="t" style="right:1459px;top:415.24px;font-size:13px;color:#000;font-weight:normal;">3</div>
<div class="t" style="right:1352px;top:415.24px;font-size:13px;color:#00B050;font-weight:bold;">2019.02.12</div>
<div class="t" style="left:573px;top:415.24px;font-size:13px;color:#00B050;font-weight:bold;">eladva</div>
<div class="t" style="right:1068px;top:415.24px;font-size:13px;color:#000;font-weight:normal;">2018.11.12</div>
<div class="t" style="left:857px;top:415.24px;font-size:13px;color:#000;font-weight:normal;">eladva</div>
<div class="t" style="right:762px;top:415.24px;font-size:13px;color:#000;font-weight:normal;">2017.05.19</div>
<div class="t" style="right:686px;top:415.24px;font-size:13px;color:#000;font-weight:normal;">51 898 875</div>
<div class="t" style="right:644px;top:415.24px;font-size:13px;color:#000;font-weight:normal;">2</div>
<div class="t" style="right:581px;top:415.24px;font-size:13px;color:#000;font-weight:normal;">2</div>
<div class="t" style="right:488px;top:415.24px;font-size:13px;color:#000;font-weight:normal;">122,115</div>
<div class="t" style="right:430px;top:415.24px;font-size:13px;color:#000;font-weight:normal;">116,64</div>
<div class="t" style="right:381px;top:415.24px;font-size:13px;color:#000;font-weight:normal;">6</div>
<div class="t" style="right:332px;top:415.24px;font-size:13px;color:#000;font-weight:normal;">4,95</div>
<div class="t" style="left:28px;top:435.24px;font-size:13px;color:#000;font-weight:normal;letter-spacing:0.6px;">Mintaprojekt 2</div>
<div class="t" style="left:226px;top:435.24px;font-size:13px;color:#000;font-weight:normal;">C</div>
<div class="t" style="right:1559px;top:435.24px;font-size:13px;color:#000;font-weight:normal;">0,5</div>
<div class="t" style="right:1459px;top:435.24px;font-size:13px;color:#000;font-weight:normal;">1</div>
<div class="t" style="right:1352px;top:435.24px;font-size:13px;color:#00B050;font-weight:bold;">2019.02.12</div>
<div class="t" style="left:573px;top:435.24px;font-size:13px;color:#00B050;font-weight:bold;">szabad</div>
<div class="t" style="right:1175px;top:435.24px;font-size:13px;color:#00B050;font-weight:bold;">70 000 000</div>
<div class="t" style="right:1068px;top:435.24px;font-size:13px;color:#000;font-weight:normal;">2018.11.12</div>
<div class="t" style="left:857px;top:435.24px;font-size:13px;color:#000;font-weight:normal;">szabad</div>
<div class="t" style="right:885px;top:435.24px;font-size:13px;color:#000;font-weight:normal;">66 000 000</div>
<div class="t" style="right:762px;top:435.24px;font-size:13px;color:#000;font-weight:normal;">2019.02.12</div>
<div class="t" style="right:686px;top:435.24px;font-size:13px;color:#000;font-weight:normal;">70 000 000</div>
<div class="t" style="right:644px;top:435.24px;font-size:13px;color:#000;font-weight:normal;">2</div>
<div class="t" style="right:581px;top:435.24px;font-size:13px;color:#000;font-weight:normal;">2</div>
<div class="t" style="right:488px;top:435.24px;font-size:13px;color:#000;font-weight:normal;">119,875</div>
<div class="t" style="right:430px;top:435.24px;font-size:13px;color:#000;font-weight:normal;">114,1</div>
<div class="t" style="right:381px;top:435.24px;font-size:13px;color:#000;font-weight:normal;">6,6</div>
<div class="t" style="right:332px;top:435.24px;font-size:13px;color:#000;font-weight:normal;">4,95</div>
<div class="t" style="left:28px;top:455.24px;font-size:13px;color:#000;font-weight:normal;letter-spacing:0.6px;">Mintaprojekt 2</div>
<div class="t" style="left:226px;top:455.24px;font-size:13px;color:#000;font-weight:normal;">C</div>
<div class="t" style="right:1559px;top:455.24px;font-size:13px;color:#000;font-weight:normal;">0,5</div>
<div class="t" style="right:1459px;top:455.24px;font-size:13px;color:#000;font-weight:normal;">2</div>
<div class="t" style="right:1352px;top:455.24px;font-size:13px;color:#00B050;font-weight:bold;">2019.02.12</div>
<div class="t" style="left:573px;top:455.24px;font-size:13px;color:#00B050;font-weight:bold;">szabad</div>
<div class="t" style="right:1175px;top:455.24px;font-size:13px;color:#00B050;font-weight:bold;">70 000 000</div>
<div class="t" style="right:1068px;top:455.24px;font-size:13px;color:#000;font-weight:normal;">2018.11.12</div>
<div class="t" style="left:857px;top:455.24px;font-size:13px;color:#000;font-weight:normal;">szabad</div>
<div class="t" style="right:885px;top:455.24px;font-size:13px;color:#000;font-weight:normal;">66 000 000</div>
<div class="t" style="right:762px;top:455.24px;font-size:13px;color:#000;font-weight:normal;">2019.02.12</div>
<div class="t" style="right:686px;top:455.24px;font-size:13px;color:#000;font-weight:normal;">70 000 000</div>
<div class="t" style="right:644px;top:455.24px;font-size:13px;color:#000;font-weight:normal;">2</div>
<div class="t" style="right:581px;top:455.24px;font-size:13px;color:#000;font-weight:normal;">2</div>
<div class="t" style="right:488px;top:455.24px;font-size:13px;color:#000;font-weight:normal;">121,595</div>
<div class="t" style="right:430px;top:455.24px;font-size:13px;color:#000;font-weight:normal;">115,82</div>
<div class="t" style="right:381px;top:455.24px;font-size:13px;color:#000;font-weight:normal;">6,6</div>
<div class="t" style="right:332px;top:455.24px;font-size:13px;color:#000;font-weight:normal;">4,95</div>
<div class="t" style="left:28px;top:475.24px;font-size:13px;color:#000;font-weight:normal;letter-spacing:0.6px;">Mintaprojekt 2</div>
<div class="t" style="left:226px;top:475.24px;font-size:13px;color:#000;font-weight:normal;">C</div>
<div class="t" style="right:1559px;top:475.24px;font-size:13px;color:#000;font-weight:normal;">0,5</div>
<div class="t" style="right:1459px;top:475.24px;font-size:13px;color:#000;font-weight:normal;">3</div>
<div class="t" style="right:1352px;top:475.24px;font-size:13px;color:#00B050;font-weight:bold;">2019.02.12</div>
<div class="t" style="left:573px;top:475.24px;font-size:13px;color:#00B050;font-weight:bold;">szabad</div>
<div class="t" style="right:1175px;top:475.24px;font-size:13px;color:#00B050;font-weight:bold;">70 000 000</div>
<div class="t" style="right:1068px;top:475.24px;font-size:13px;color:#000;font-weight:normal;">2018.11.12</div>
<div class="t" style="left:857px;top:475.24px;font-size:13px;color:#000;font-weight:normal;">szabad</div>
<div class="t" style="right:885px;top:475.24px;font-size:13px;color:#000;font-weight:normal;">66 000 000</div>
<div class="t" style="right:762px;top:475.24px;font-size:13px;color:#000;font-weight:normal;">2019.02.12</div>
<div class="t" style="right:686px;top:475.24px;font-size:13px;color:#000;font-weight:normal;">70 000 000</div>
<div class="t" style="right:644px;top:475.24px;font-size:13px;color:#000;font-weight:normal;">2</div>
<div class="t" style="right:581px;top:475.24px;font-size:13px;color:#000;font-weight:normal;">2</div>
<div class="t" style="right:488px;top:475.24px;font-size:13px;color:#000;font-weight:normal;">122,115</div>
<div class="t" style="right:430px;top:475.24px;font-size:13px;color:#000;font-weight:normal;">116,64</div>
<div class="t" style="right:381px;top:475.24px;font-size:13px;color:#000;font-weight:normal;">6</div>
<div class="t" style="right:332px;top:475.24px;font-size:13px;color:#000;font-weight:normal;">4,95</div>
<div class="t" style="left:28px;top:495.24px;font-size:13px;color:#000;font-weight:normal;letter-spacing:0.6px;">Mintaprojekt 2</div>
<div class="t" style="left:226px;top:495.24px;font-size:13px;color:#000;font-weight:normal;">D</div>
<div class="t" style="right:1559px;top:495.24px;font-size:13px;color:#000;font-weight:normal;">0,5</div>
<div class="t" style="right:1459px;top:495.24px;font-size:13px;color:#000;font-weight:normal;">1</div>
<div class="t" style="right:1352px;top:495.24px;font-size:13px;color:#00B050;font-weight:bold;">2019.02.12</div>
<div class="t" style="left:573px;top:495.24px;font-size:13px;color:#00B050;font-weight:bold;">szabad</div>
<div class="t" style="right:1175px;top:495.24px;font-size:13px;color:#00B050;font-weight:bold;">70 000 000</div>
<div class="t" style="right:1068px;top:495.24px;font-size:13px;color:#000;font-weight:normal;">2018.11.12</div>
<div class="t" style="left:857px;top:495.24px;font-size:13px;color:#000;font-weight:normal;">szabad</div>
<div class="t" style="right:885px;top:495.24px;font-size:13px;color:#000;font-weight:normal;">66 000 000</div>
<div class="t" style="right:762px;top:495.24px;font-size:13px;color:#000;font-weight:normal;">2019.02.12</div>
<div class="t" style="right:686px;top:495.24px;font-size:13px;color:#000;font-weight:normal;">70 000 000</div>
<div class="t" style="right:644px;top:495.24px;font-size:13px;color:#000;font-weight:normal;">2</div>
<div class="t" style="right:581px;top:495.24px;font-size:13px;color:#000;font-weight:normal;">2</div>
<div class="t" style="right:488px;top:495.24px;font-size:13px;color:#000;font-weight:normal;">119,875</div>
<div class="t" style="right:430px;top:495.24px;font-size:13px;color:#000;font-weight:normal;">114,1</div>
<div class="t" style="right:381px;top:495.24px;font-size:13px;color:#000;font-weight:normal;">6,6</div>
<div class="t" style="right:332px;top:495.24px;font-size:13px;color:#000;font-weight:normal;">4,95</div>
<div class="t" style="left:28px;top:515.24px;font-size:13px;color:#000;font-weight:normal;letter-spacing:0.6px;">Mintaprojekt 2</div>
<div class="t" style="left:226px;top:515.24px;font-size:13px;color:#000;font-weight:normal;">D</div>
<div class="t" style="right:1559px;top:515.24px;font-size:13px;color:#000;font-weight:normal;">0,5</div>
<div class="t" style="right:1459px;top:515.24px;font-size:13px;color:#000;font-weight:normal;">2</div>
<div class="t" style="right:1352px;top:515.24px;font-size:13px;color:#00B050;font-weight:bold;">2019.02.12</div>
<div class="t" style="left:573px;top:515.24px;font-size:13px;color:#00B050;font-weight:bold;">eladva</div>
<div class="t" style="right:1068px;top:515.24px;font-size:13px;color:#000;font-weight:normal;">2018.11.12</div>
<div class="t" style="left:857px;top:515.24px;font-size:13px;color:#000;font-weight:normal;">eladva</div>
<div class="t" style="right:762px;top:515.24px;font-size:13px;color:#000;font-weight:normal;">2017.05.19</div>
<div class="t" style="right:686px;top:515.24px;font-size:13px;color:#000;font-weight:normal;">51 677 875</div>
<div class="t" style="right:644px;top:515.24px;font-size:13px;color:#000;font-weight:normal;">2</div>
<div class="t" style="right:581px;top:515.24px;font-size:13px;color:#000;font-weight:normal;">2</div>
<div class="t" style="right:488px;top:515.24px;font-size:13px;color:#000;font-weight:normal;">121,595</div>
<div class="t" style="right:430px;top:515.24px;font-size:13px;color:#000;font-weight:normal;">115,82</div>
<div class="t" style="right:381px;top:515.24px;font-size:13px;color:#000;font-weight:normal;">6,6</div>
<div class="t" style="right:332px;top:515.24px;font-size:13px;color:#000;font-weight:normal;">4,95</div>
<div class="t" style="left:28px;top:535.24px;font-size:13px;color:#000;font-weight:normal;letter-spacing:0.6px;">Mintaprojekt 2</div>
<div class="t" style="left:226px;top:535.24px;font-size:13px;color:#000;font-weight:normal;">D</div>
<div class="t" style="right:1559px;top:535.24px;font-size:13px;color:#000;font-weight:normal;">0,5</div>
<div class="t" style="right:1459px;top:535.24px;font-size:13px;color:#000;font-weight:normal;">3</div>
<div class="t" style="right:1352px;top:535.24px;font-size:13px;color:#00B050;font-weight:bold;">2019.02.12</div>
<div class="t" style="left:573px;top:535.24px;font-size:13px;color:#00B050;font-weight:bold;">eladva</div>
<div class="t" style="right:1068px;top:535.24px;font-size:13px;color:#000;font-weight:normal;">2018.11.12</div>
<div class="t" style="left:857px;top:535.24px;font-size:13px;color:#000;font-weight:normal;">eladva</div>
<div class="t" style="right:762px;top:535.24px;font-size:13px;color:#000;font-weight:normal;">2017.05.19</div>
<div class="t" style="right:686px;top:535.24px;font-size:13px;color:#000;font-weight:normal;">52 000 000</div>
<div class="t" style="right:644px;top:535.24px;font-size:13px;color:#000;font-weight:normal;">2</div>
<div class="t" style="right:581px;top:535.24px;font-size:13px;color:#000;font-weight:normal;">2</div>
<div class="t" style="right:488px;top:535.24px;font-size:13px;color:#000;font-weight:normal;">122,115</div>
<div class="t" style="right:430px;top:535.24px;font-size:13px;color:#000;font-weight:normal;">116,64</div>
<div class="t" style="right:381px;top:535.24px;font-size:13px;color:#000;font-weight:normal;">6</div>
<div class="t" style="right:332px;top:535.24px;font-size:13px;color:#000;font-weight:normal;">4,95</div>
<div class="t" style="left:28px;top:555.24px;font-size:13px;color:#000;font-weight:normal;letter-spacing:0.6px;">Mintaprojekt 3</div>
<div class="t" style="right:1559px;top:555.24px;font-size:13px;color:#000;font-weight:normal;">0</div>
<div class="t" style="left:366px;top:555.24px;font-size:13px;color:#000;font-weight:normal;">AG-00-01</div>
<div class="t" style="right:1352px;top:555.24px;font-size:13px;color:#00B050;font-weight:bold;">2019.02.07</div>
<div class="t" style="left:573px;top:555.24px;font-size:13px;color:#00B050;font-weight:bold;">szabad</div>
<div class="t" style="right:1175px;top:555.24px;font-size:13px;color:#00B050;font-weight:bold;">40 205 000</div>
<div class="t" style="right:1068px;top:555.24px;font-size:13px;color:#000;font-weight:normal;">2018.12.06</div>
<div class="t" style="left:857px;top:555.24px;font-size:13px;color:#000;font-weight:normal;">szabad</div>
<div class="t" style="right:762px;top:555.24px;font-size:13px;color:#000;font-weight:normal;">2019.02.07</div>
<div class="t" style="right:686px;top:555.24px;font-size:13px;color:#000;font-weight:normal;">40 205 000</div>
<div class="t" style="right:644px;top:555.24px;font-size:13px;color:#000;font-weight:normal;">2</div>
<div class="t" style="right:488px;top:555.24px;font-size:13px;color:#000;font-weight:normal;">47,855</div>
<div class="t" style="right:430px;top:555.24px;font-size:13px;color:#000;font-weight:normal;">44,65</div>
<div class="t" style="right:381px;top:555.24px;font-size:13px;color:#000;font-weight:normal;">6,41</div>
<div class="t" style="left:1796px;top:555.24px;font-size:13px;color:#000;font-weight:normal;">ÉNY</div>
<div class="t" style="left:28px;top:575.24px;font-size:13px;color:#000;font-weight:normal;letter-spacing:0.6px;">Mintaprojekt 3</div>
<div class="t" style="right:1559px;top:575.24px;font-size:13px;color:#000;font-weight:normal;">0</div>
<div class="t" style="left:366px;top:575.24px;font-size:13px;color:#000;font-weight:normal;">AG-00-02</div>
<div class="t" style="right:1352px;top:575.24px;font-size:13px;color:#00B050;font-weight:bold;">2019.02.07</div>
<div class="t" style="left:573px;top:575.24px;font-size:13px;color:#00B050;font-weight:bold;">szabad</div>
<div class="t" style="right:1068px;top:575.24px;font-size:13px;color:#000;font-weight:normal;">2018.12.06</div>
<div class="t" style="left:857px;top:575.24px;font-size:13px;color:#000;font-weight:normal;">szabad</div>
<div class="t" style="right:644px;top:575.24px;font-size:13px;color:#000;font-weight:normal;">2</div>
<div class="t" style="right:488px;top:575.24px;font-size:13px;color:#000;font-weight:normal;">47,94</div>
<div class="t" style="right:430px;top:575.24px;font-size:13px;color:#000;font-weight:normal;">44,65</div>
<div class="t" style="right:381px;top:575.24px;font-size:13px;color:#000;font-weight:normal;">6,58</div>
<div class="t" style="left:1796px;top:575.24px;font-size:13px;color:#000;font-weight:normal;">ÉNY</div>
<div class="t" style="left:28px;top:595.24px;font-size:13px;color:#000;font-weight:normal;letter-spacing:0.6px;">Mintaprojekt 3</div>
<div class="t" style="right:1559px;top:595.24px;font-size:13px;color:#000;font-weight:normal;">0</div>
<div class="t" style="left:366px;top:595.24px;font-size:13px;color:#000;font-weight:normal;">AG-00-03</div>
<div class="t" style="right:1352px;top:595.24px;font-size:13px;color:#00B050;font-weight:bold;">2019.02.07</div>
<div class="t" style="left:573px;top:595.24px;font-size:13px;color:#00B050;font-weight:bold;">szabad</div>
<div class="t" style="right:1068px;top:595.24px;font-size:13px;color:#000;font-weight:normal;">2018.12.06</div>
<div class="t" style="left:857px;top:595.24px;font-size:13px;color:#000;font-weight:normal;">szabad</div>
<div class="t" style="right:644px;top:595.24px;font-size:13px;color:#000;font-weight:normal;">2</div>
<div class="t" style="right:488px;top:595.24px;font-size:13px;color:#000;font-weight:normal;">47,94</div>
<div class="t" style="right:430px;top:595.24px;font-size:13px;color:#000;font-weight:normal;">44,65</div>
<div class="t" style="right:381px;top:595.24px;font-size:13px;color:#000;font-weight:normal;">6,58</div>
<div class="t" style="left:1796px;top:595.24px;font-size:13px;color:#000;font-weight:normal;">ÉNY</div>
<div class="t" style="left:28px;top:615.24px;font-size:13px;color:#000;font-weight:normal;letter-spacing:0.6px;">Mintaprojekt 3</div>
<div class="t" style="right:1559px;top:615.24px;font-size:13px;color:#000;font-weight:normal;">0</div>
<div class="t" style="left:366px;top:615.24px;font-size:13px;color:#000;font-weight:normal;">AG-00-04</div>
<div class="t" style="right:1352px;top:615.24px;font-size:13px;color:#00B050;font-weight:bold;">2019.02.07</div>
<div class="t" style="left:573px;top:615.24px;font-size:13px;color:#00B050;font-weight:bold;">eladva</div>
<div class="t" style="right:1068px;top:615.24px;font-size:13px;color:#000;font-weight:normal;">2018.12.06</div>
<div class="t" style="left:857px;top:615.24px;font-size:13px;color:#000;font-weight:normal;">eladva</div>
<div class="t" style="right:644px;top:615.24px;font-size:13px;color:#000;font-weight:normal;">1</div>
<div class="t" style="right:488px;top:615.24px;font-size:13px;color:#000;font-weight:normal;">35,97</div>
<div class="t" style="right:430px;top:615.24px;font-size:13px;color:#000;font-weight:normal;">33,57</div>
<div class="t" style="right:381px;top:615.24px;font-size:13px;color:#000;font-weight:normal;">4,8</div>
<div class="t" style="left:1796px;top:615.24px;font-size:13px;color:#000;font-weight:normal;">ÉNY</div>
<div class="t" style="left:28px;top:635.24px;font-size:13px;color:#000;font-weight:normal;letter-spacing:0.6px;">Mintaprojekt 3</div>
<div class="t" style="right:1559px;top:635.24px;font-size:13px;color:#000;font-weight:normal;">0</div>
<div class="t" style="left:366px;top:635.24px;font-size:13px;color:#000;font-weight:normal;">AG-00-05</div>
<div class="t" style="right:1352px;top:635.24px;font-size:13px;color:#00B050;font-weight:bold;">2019.02.07</div>
<div class="t" style="left:573px;top:635.24px;font-size:13px;color:#00B050;font-weight:bold;">szabad</div>
<div class="t" style="right:1175px;top:635.24px;font-size:13px;color:#00B050;font-weight:bold;">38 367 000</div>
<div class="t" style="right:1068px;top:635.24px;font-size:13px;color:#000;font-weight:normal;">2018.12.06</div>
<div class="t" style="left:857px;top:635.24px;font-size:13px;color:#000;font-weight:normal;">szabad</div>
<div class="t" style="right:762px;top:635.24px;font-size:13px;color:#000;font-weight:normal;">2019.02.07</div>
<div class="t" style="right:686px;top:635.24px;font-size:13px;color:#000;font-weight:normal;">38 367 000</div>
<div class="t" style="right:644px;top:635.24px;font-size:13px;color:#000;font-weight:normal;">2</div>
<div class="t" style="right:488px;top:635.24px;font-size:13px;color:#000;font-weight:normal;">42,055</div>
<div class="t" style="right:430px;top:635.24px;font-size:13px;color:#000;font-weight:normal;">39,85</div>
<div class="t" style="right:381px;top:635.24px;font-size:13px;color:#000;font-weight:normal;">4,41</div>
<div class="t" style="left:1796px;top:635.24px;font-size:13px;color:#000;font-weight:normal;">ÉNY</div>
<div class="t" style="left:28px;top:655.24px;font-size:13px;color:#000;font-weight:normal;letter-spacing:0.6px;">Mintaprojekt 3</div>
<div class="t" style="right:1559px;top:655.24px;font-size:13px;color:#000;font-weight:normal;">0</div>
<div class="t" style="left:366px;top:655.24px;font-size:13px;color:#000;font-weight:normal;">AG-00-06</div>
<div class="t" style="right:1352px;top:655.24px;font-size:13px;color:#00B050;font-weight:bold;">2019.02.07</div>
<div class="t" style="left:573px;top:655.24px;font-size:13px;color:#00B050;font-weight:bold;">szabad</div>
<div class="t" style="right:1068px;top:655.24px;font-size:13px;color:#000;font-weight:normal;">2018.12.06</div>
<div class="t" style="left:857px;top:655.24px;font-size:13px;color:#000;font-weight:normal;">szabad</div>
<div class="t" style="right:644px;top:655.24px;font-size:13px;color:#000;font-weight:normal;">2</div>
<div class="t" style="right:488px;top:655.24px;font-size:13px;color:#000;font-weight:normal;">54,95</div>
<div class="t" style="right:430px;top:655.24px;font-size:13px;color:#000;font-weight:normal;">51,3</div>
<div class="t" style="right:381px;top:655.24px;font-size:13px;color:#000;font-weight:normal;">7,3</div>
<div class="t" style="left:1796px;top:655.24px;font-size:13px;color:#000;font-weight:normal;">ÉK</div>
<div class="t" style="left:28px;top:675.24px;font-size:13px;color:#000;font-weight:normal;letter-spacing:0.6px;">Mintaprojekt 3</div>
<div class="t" style="right:1559px;top:675.24px;font-size:13px;color:#000;font-weight:normal;">0</div>
<div class="t" style="left:366px;top:675.24px;font-size:13px;color:#000;font-weight:normal;">AG-00-07</div>
<div class="t" style="right:1352px;top:675.24px;font-size:13px;color:#00B050;font-weight:bold;">2019.02.07</div>
<div class="t" style="left:573px;top:675.24px;font-size:13px;color:#00B050;font-weight:bold;">eladva</div>
<div class="t" style="right:1068px;top:675.24px;font-size:13px;color:#000;font-weight:normal;">2018.12.06</div>
<div class="t" style="left:857px;top:675.24px;font-size:13px;color:#000;font-weight:normal;">eladva</div>
<div class="t" style="right:644px;top:675.24px;font-size:13px;color:#000;font-weight:normal;">1</div>
<div class="t" style="right:488px;top:675.24px;font-size:13px;color:#000;font-weight:normal;">33,955</div>
<div class="t" style="right:430px;top:675.24px;font-size:13px;color:#000;font-weight:normal;">31,07</div>
<div class="t" style="right:381px;top:675.24px;font-size:13px;color:#000;font-weight:normal;">5,77</div>
<div class="t" style="left:1796px;top:675.24px;font-size:13px;color:#000;font-weight:normal;">ÉK</div>
<div class="t" style="left:28px;top:695.24px;font-size:13px;color:#000;font-weight:normal;letter-spacing:0.6px;">Mintaprojekt 3</div>
<div class="t" style="right:1559px;top:695.24px;font-size:13px;color:#000;font-weight:normal;">0</div>
<div class="t" style="left:366px;top:695.24px;font-size:13px;color:#000;font-weight:normal;">AG-00-08</div>
<div class="t" style="right:1352px;top:695.24px;font-size:13px;color:#00B050;font-weight:bold;">2019.02.07</div>
<div class="t" style="left:573px;top:695.24px;font-size:13px;color:#00B050;font-weight:bold;">szabad</div>
<div class="t" style="right:1175px;top:695.24px;font-size:13px;color:#00B050;font-weight:bold;">38 956 000</div>
<div class="t" style="right:1068px;top:695.24px;font-size:13px;color:#000;font-weight:normal;">2018.12.06</div>
<div class="t" style="left:857px;top:695.24px;font-size:13px;color:#000;font-weight:normal;">szabad</div>
<div class="t" style="right:762px;top:695.24px;font-size:13px;color:#000;font-weight:normal;">2019.02.07</div>
<div class="t" style="right:686px;top:695.24px;font-size:13px;color:#000;font-weight:normal;">38 956 000</div>
<div class="t" style="right:644px;top:695.24px;font-size:13px;color:#000;font-weight:normal;">2</div>
<div class="t" style="right:488px;top:695.24px;font-size:13px;color:#000;font-weight:normal;">43,18</div>
<div class="t" style="right:430px;top:695.24px;font-size:13px;color:#000;font-weight:normal;">40,78</div>
<div class="t" style="right:381px;top:695.24px;font-size:13px;color:#000;font-weight:normal;">4,8</div>
<div class="t" style="left:1796px;top:695.24px;font-size:13px;color:#000;font-weight:normal;">ÉK</div>
<div class="t" style="left:28px;top:715.24px;font-size:13px;color:#000;font-weight:normal;letter-spacing:0.6px;">Mintaprojekt 3</div>
<div class="t" style="right:1559px;top:715.24px;font-size:13px;color:#000;font-weight:normal;">0</div>
<div class="t" style="left:366px;top:715.24px;font-size:13px;color:#000;font-weight:normal;">AG-00-09</div>
<div class="t" style="right:1352px;top:715.24px;font-size:13px;color:#00B050;font-weight:bold;">2019.02.07</div>
<div class="t" style="left:573px;top:715.24px;font-size:13px;color:#00B050;font-weight:bold;">szabad</div>
<div class="t" style="right:1175px;top:715.24px;font-size:13px;color:#00B050;font-weight:bold;">38 772 000</div>
<div class="t" style="right:1068px;top:715.24px;font-size:13px;color:#000;font-weight:normal;">2018.12.06</div>
<div class="t" style="left:857px;top:715.24px;font-size:13px;color:#000;font-weight:normal;">szabad</div>
<div class="t" style="right:762px;top:715.24px;font-size:13px;color:#000;font-weight:normal;">2019.02.07</div>
<div class="t" style="right:686px;top:715.24px;font-size:13px;color:#000;font-weight:normal;">38 772 000</div>
<div class="t" style="right:644px;top:715.24px;font-size:13px;color:#000;font-weight:normal;">2</div>
<div class="t" style="right:488px;top:715.24px;font-size:13px;color:#000;font-weight:normal;">42,2</div>
<div class="t" style="right:430px;top:715.24px;font-size:13px;color:#000;font-weight:normal;">40,78</div>
<div class="t" style="right:381px;top:715.24px;font-size:13px;color:#000;font-weight:normal;">2,84</div>
<div class="t" style="left:1796px;top:715.24px;font-size:13px;color:#000;font-weight:normal;">ÉK</div>
<div class="t" style="left:28px;top:735.24px;font-size:13px;color:#000;font-weight:normal;letter-spacing:0.6px;">Mintaprojekt 3</div>
<div class="t" style="right:1559px;top:735.24px;font-size:13px;color:#000;font-weight:normal;">0</div>
<div class="t" style="left:366px;top:735.24px;font-size:13px;color:#000;font-weight:normal;">AG-00-10</div>
<div class="t" style="right:1352px;top:735.24px;font-size:13px;color:#00B050;font-weight:bold;">2019.02.07</div>
<div class="t" style="left:573px;top:735.24px;font-size:13px;color:#00B050;font-weight:bold;">szabad</div>
<div class="t" style="right:1175px;top:735.24px;font-size:13px;color:#00B050;font-weight:bold;">38 772 000</div>
<div class="t" style="right:1068px;top:735.24px;font-size:13px;color:#000;font-weight:normal;">2018.12.06</div>
<div class="t" style="left:857px;top:735.24px;font-size:13px;color:#000;font-weight:normal;">szabad</div>
<div class="t" style="right:762px;top:735.24px;font-size:13px;color:#000;font-weight:normal;">2019.02.07</div>
<div class="t" style="right:686px;top:735.24px;font-size:13px;color:#000;font-weight:normal;">38 772 000</div>
<div class="t" style="right:644px;top:735.24px;font-size:13px;color:#000;font-weight:normal;">2</div>
<div class="t" style="right:488px;top:735.24px;font-size:13px;color:#000;font-weight:normal;">42,2</div>
<div class="t" style="right:430px;top:735.24px;font-size:13px;color:#000;font-weight:normal;">40,78</div>
<div class="t" style="right:381px;top:735.24px;font-size:13px;color:#000;font-weight:normal;">2,84</div>
<div class="t" style="left:1796px;top:735.24px;font-size:13px;color:#000;font-weight:normal;">ÉK</div>
<div class="t" style="left:28px;top:755.24px;font-size:13px;color:#000;font-weight:normal;letter-spacing:0.6px;">Mintaprojekt 3</div>
<div class="t" style="right:1559px;top:755.24px;font-size:13px;color:#000;font-weight:normal;">0</div>
<div class="t" style="left:366px;top:755.24px;font-size:13px;color:#000;font-weight:normal;">AG-00-11</div>
<div class="t" style="right:1352px;top:755.24px;font-size:13px;color:#00B050;font-weight:bold;">2019.02.07</div>
<div class="t" style="left:573px;top:755.24px;font-size:13px;color:#00B050;font-weight:bold;">eladva</div>
<div class="t" style="right:1068px;top:755.24px;font-size:13px;color:#000;font-weight:normal;">2018.12.06</div>
<div class="t" style="left:857px;top:755.24px;font-size:13px;color:#000;font-weight:normal;">szabad</div>
<div class="t" style="right:644px;top:755.24px;font-size:13px;color:#000;font-weight:normal;">2</div>
<div class="t" style="right:488px;top:755.24px;font-size:13px;color:#000;font-weight:normal;">42,2</div>
<div class="t" style="right:430px;top:755.24px;font-size:13px;color:#000;font-weight:normal;">40,78</div>
<div class="t" style="right:381px;top:755.24px;font-size:13px;color:#000;font-weight:normal;">2,84</div>
<div class="t" style="left:1796px;top:755.24px;font-size:13px;color:#000;font-weight:normal;">ÉK</div>
<div class="t" style="left:28px;top:775.24px;font-size:13px;color:#000;font-weight:normal;letter-spacing:0.6px;">Mintaprojekt 3</div>
<div class="t" style="right:1559px;top:775.24px;font-size:13px;color:#000;font-weight:normal;">0</div>
<div class="t" style="left:366px;top:775.24px;font-size:13px;color:#000;font-weight:normal;">AG-00-12</div>
<div class="t" style="right:1352px;top:775.24px;font-size:13px;color:#00B050;font-weight:bold;">2019.02.07</div>
<div class="t" style="left:573px;top:775.24px;font-size:13px;color:#00B050;font-weight:bold;">szabad</div>
<div class="t" style="right:1068px;top:775.24px;font-size:13px;color:#000;font-weight:normal;">2018.12.06</div>
<div class="t" style="left:857px;top:775.24px;font-size:13px;color:#000;font-weight:normal;">szabad</div>
<div class="t" style="right:644px;top:775.24px;font-size:13px;color:#000;font-weight:normal;">2</div>
<div class="t" style="right:488px;top:775.24px;font-size:13px;color:#000;font-weight:normal;">53,1</div>
<div class="t" style="right:430px;top:775.24px;font-size:13px;color:#000;font-weight:normal;">48,67</div>
<div class="t" style="right:381px;top:775.24px;font-size:13px;color:#000;font-weight:normal;">8,86</div>
<div class="t" style="right:282px;top:775.24px;font-size:13px;color:#000;font-weight:normal;">9,81</div>
<div class="t" style="left:1796px;top:775.24px;font-size:13px;color:#000;font-weight:normal;">DNY</div>
<div class="t" style="left:28px;top:795.24px;font-size:13px;color:#000;font-weight:normal;letter-spacing:0.6px;">Mintaprojekt 3</div>
<div class="t" style="right:1559px;top:795.24px;font-size:13px;color:#000;font-weight:normal;">0</div>
<div class="t" style="left:366px;top:795.24px;font-size:13px;color:#000;font-weight:normal;">AG-00-13</div>
<div class="t" style="right:1352px;top:795.24px;font-size:13px;color:#00B050;font-weight:bold;">2019.02.07</div>
<div class="t" style="left:573px;top:795.24px;font-size:13px;color:#00B050;font-weight:bold;">szabad</div>
<div class="t" style="right:1068px;top:795.24px;font-size:13px;color:#000;font-weight:normal;">2018.12.06</div>
<div class="t" style="left:857px;top:795.24px;font-size:13px;color:#000;font-weight:normal;">szabad</div>
<div class="t" style="right:644px;top:795.24px;font-size:13px;color:#000;font-weight:normal;">2</div>
<div class="t" style="right:488px;top:795.24px;font-size:13px;color:#000;font-weight:normal;">50,055</div>
<div class="t" style="right:430px;top:795.24px;font-size:13px;color:#000;font-weight:normal;">45,37</div>
<div class="t" style="right:381px;top:795.24px;font-size:13px;color:#000;font-weight:normal;">9,37</div>
<div class="t" style="right:282px;top:795.24px;font-size:13px;color:#000;font-weight:normal;">18,41</div>
<div class="t" style="left:1796px;top:795.24px;font-size:13px;color:#000;font-weight:normal;">DNY</div>
<div class="t" style="left:28px;top:815.24px;font-size:13px;color:#000;font-weight:normal;letter-spacing:0.6px;">Mintaprojekt 3</div>
<div class="t" style="right:1559px;top:815.24px;font-size:13px;color:#000;font-weight:normal;">0</div>
<div class="t" style="left:366px;top:815.24px;font-size:13px;color:#000;font-weight:normal;">AG-00-14</div>
<div class="t" style="right:1352px;top:815.24px;font-size:13px;color:#00B050;font-weight:bold;">2019.02.07</div>
<div class="t" style="left:573px;top:815.24px;font-size:13px;color:#00B050;font-weight:bold;">eladva</div>
<div class="t" style="right:1068px;top:815.24px;font-size:13px;color:#000;font-weight:normal;">2018.12.06</div>
<div class="t" style="left:857px;top:815.24px;font-size:13px;color:#000;font-weight:normal;">eladva</div>
<div class="t" style="right:644px;top:815.24px;font-size:13px;color:#000;font-weight:normal;">1</div>
<div class="t" style="right:488px;top:815.24px;font-size:13px;color:#000;font-weight:normal;">31,575</div>
<div class="t" style="right:430px;top:815.24px;font-size:13px;color:#000;font-weight:normal;">29,29</div>
<div class="t" style="right:381px;top:815.24px;font-size:13px;color:#000;font-weight:normal;">4,57</div>
<div class="t" style="right:282px;top:815.24px;font-size:13px;color:#000;font-weight:normal;">16,23</div>
<div class="t" style="left:1796px;top:815.24px;font-size:13px;color:#000;font-weight:normal;">DNY</div>
<div class="t" style="left:28px;top:835.24px;font-size:13px;color:#000;font-weight:normal;letter-spacing:0.6px;">Mintaprojekt 3</div>
<div class="t" style="right:1559px;top:835.24px;font-size:13px;color:#000;font-weight:normal;">0</div>
<div class="t" style="left:366px;top:835.24px;font-size:13px;color:#000;font-weight:normal;">AG-00-15</div>
<div class="t" style="right:1352px;top:835.24px;font-size:13px;color:#00B050;font-weight:bold;">2019.02.07</div>
<div class="t" style="left:573px;top:835.24px;font-size:13px;color:#00B050;font-weight:bold;">eladva</div>
<div class="t" style="right:1068px;top:835.24px;font-size:13px;color:#000;font-weight:normal;">2018.12.06</div>
<div class="t" style="left:857px;top:835.24px;font-size:13px;color:#000;font-weight:normal;">szabad</div>
<div class="t" style="right:644px;top:835.24px;font-size:13px;color:#000;font-weight:normal;">2</div>
<div class="t" style="right:488px;top:835.24px;font-size:13px;color:#000;font-weight:normal;">47,295</div>
<div class="t" style="right:430px;top:835.24px;font-size:13px;color:#000;font-weight:normal;">44,82</div>
<div class="t" style="right:381px;top:835.24px;font-size:13px;color:#000;font-weight:normal;">4,95</div>
<div class="t" style="right:282px;top:835.24px;font-size:13px;color:#000;font-weight:normal;">10,93</div>
<div class="t" style="left:1796px;top:835.24px;font-size:13px;color:#000;font-weight:normal;">DK</div>
<div class="t" style="left:28px;top:855.24px;font-size:13px;color:#000;font-weight:normal;letter-spacing:0.6px;">Mintaprojekt 3</div>
<div class="t" style="right:1559px;top:855.24px;font-size:13px;color:#000;font-weight:normal;">0</div>
<div class="t" style="left:366px;top:855.24px;font-size:13px;color:#000;font-weight:normal;">AG-00-16</div>
<div class="t" style="right:1352px;top:855.24px;font-size:13px;color:#00B050;font-weight:bold;">2019.02.07</div>
<div class="t" style="left:573px;top:855.24px;font-size:13px;color:#00B050;font-weight:bold;">szabad</div>
<div class="t" style="right:1175px;top:855.24px;font-size:13px;color:#00B050;font-weight:bold;">54 566 000</div>
<div class="t" style="right:1068px;top:855.24px;font-size:13px;color:#000;font-weight:normal;">2018.12.06</div>
<div class="t" style="left:857px;top:855.24px;font-size:13px;color:#000;font-weight:normal;">szabad</div>
<div class="t" style="right:762px;top:855.24px;font-size:13px;color:#000;font-weight:normal;">2019.02.07</div>
<div class="t" style="right:686px;top:855.24px;font-size:13px;color:#000;font-weight:normal;">54 566 000</div>
<div class="t" style="right:644px;top:855.24px;font-size:13px;color:#000;font-weight:normal;">3</div>
<div class="t" style="right:488px;top:855.24px;font-size:13px;color:#000;font-weight:normal;">66,835</div>
<div class="t" style="right:430px;top:855.24px;font-size:13px;color:#000;font-weight:normal;">62,11</div>
<div class="t" style="right:381px;top:855.24px;font-size:13px;color:#000;font-weight:normal;">9,45</div>
<div class="t" style="right:282px;top:855.24px;font-size:13px;color:#000;font-weight:normal;">32,9</div>
<div class="t" style="left:1796px;top:855.24px;font-size:13px;color:#000;font-weight:normal;">DK</div>
<div class="t" style="left:28px;top:875.24px;font-size:13px;color:#000;font-weight:normal;letter-spacing:0.6px;">Mintaprojekt 3</div>
<div class="t" style="right:1559px;top:875.24px;font-size:13px;color:#000;font-weight:normal;">0</div>
<div class="t" style="left:366px;top:875.24px;font-size:13px;color:#000;font-weight:normal;">AG-00-17</div>
<div class="t" style="right:1352px;top:875.24px;font-size:13px;color:#00B050;font-weight:bold;">2019.02.07</div>
<div class="t" style="left:573px;top:875.24px;font-size:13px;color:#00B050;font-weight:bold;">szabad</div>
<div class="t" style="right:1068px;top:875.24px;font-size:13px;color:#000;font-weight:normal;">2018.12.06</div>
<div class="t" style="left:857px;top:875.24px;font-size:13px;color:#000;font-weight:normal;">szabad</div>
<div class="t" style="right:644px;top:875.24px;font-size:13px;color:#000;font-weight:normal;">2</div>
<div class="t" style="right:488px;top:875.24px;font-size:13px;color:#000;font-weight:normal;">48,775</div>
<div class="t" style="right:430px;top:875.24px;font-size:13px;color:#000;font-weight:normal;">44,05</div>
<div class="t" style="right:381px;top:875.24px;font-size:13px;color:#000;font-weight:normal;">9,45</div>
<div class="t" style="right:282px;top:875.24px;font-size:13px;color:#000;font-weight:normal;">20,88</div>
<div class="t" style="left:1796px;top:875.24px;font-size:13px;color:#000;font-weight:normal;">DK</div>
<div class="t" style="left:28px;top:895.24px;font-size:13px;color:#000;font-weight:normal;letter-spacing:0.6px;">Mintaprojekt 3</div>
<div class="t" style="right:1559px;top:895.24px;font-size:13px;color:#000;font-weight:normal;">0</div>
<div class="t" style="left:366px;top:895.24px;font-size:13px;color:#000;font-weight:normal;">AG-00-18</div>
<div class="t" style="right:1352px;top:895.24px;font-size:13px;color:#00B050;font-weight:bold;">2019.02.07</div>
<div class="t" style="left:573px;top:895.24px;font-size:13px;color:#00B050;font-weight:bold;">szabad</div>
<div class="t" style="right:1068px;top:895.24px;font-size:13px;color:#000;font-weight:normal;">2018.12.06</div>
<div class="t" style="left:857px;top:895.24px;font-size:13px;color:#000;font-weight:normal;">szabad</div>
<div class="t" style="right:644px;top:895.24px;font-size:13px;color:#000;font-weight:normal;">2</div>
<div class="t" style="right:488px;top:895.24px;font-size:13px;color:#000;font-weight:normal;">48,775</div>
<div class="t" style="right:430px;top:895.24px;font-size:13px;color:#000;font-weight:normal;">44,05</div>
<div class="t" style="right:381px;top:895.24px;font-size:13px;color:#000;font-weight:normal;">9,45</div>
<div class="t" style="right:282px;top:895.24px;font-size:13px;color:#000;font-weight:normal;">21,22</div>
<div class="t" style="left:1796px;top:895.24px;font-size:13px;color:#000;font-weight:normal;">DK</div>
<div class="t" style="left:28px;top:915.24px;font-size:13px;color:#000;font-weight:normal;letter-spacing:0.6px;">Mintaprojekt 3</div>
<div class="t" style="right:1559px;top:915.24px;font-size:13px;color:#000;font-weight:normal;">0</div>
<div class="t" style="left:366px;top:915.24px;font-size:13px;color:#000;font-weight:normal;">AG-00-19</div>
<div class="t" style="right:1352px;top:915.24px;font-size:13px;color:#00B050;font-weight:bold;">2019.02.07</div>
<div class="t" style="left:573px;top:915.24px;font-size:13px;color:#00B050;font-weight:bold;">eladva</div>
<div class="t" style="right:1068px;top:915.24px;font-size:13px;color:#000;font-weight:normal;">2018.12.06</div>
<div class="t" style="left:857px;top:915.24px;font-size:13px;color:#000;font-weight:normal;">eladva</div>
<div class="t" style="right:644px;top:915.24px;font-size:13px;color:#000;font-weight:normal;">1</div>
<div class="t" style="right:488px;top:915.24px;font-size:13px;color:#000;font-weight:normal;">34,355</div>
<div class="t" style="right:430px;top:915.24px;font-size:13px;color:#000;font-weight:normal;">30,38</div>
<div class="t" style="right:381px;top:915.24px;font-size:13px;color:#000;font-weight:normal;">7,95</div>
<div class="t" style="right:282px;top:915.24px;font-size:13px;color:#000;font-weight:normal;">13,31</div>
<div class="t" style="left:1796px;top:915.24px;font-size:13px;color:#000;font-weight:normal;">DK</div>
<div class="t" style="left:28px;top:935.24px;font-size:13px;color:#000;font-weight:normal;letter-spacing:0.6px;">Mintaprojekt 3</div>
<div class="t" style="right:1559px;top:935.24px;font-size:13px;color:#000;font-weight:normal;">0</div>
<div class="t" style="left:366px;top:935.24px;font-size:13px;color:#000;font-weight:normal;">AG-00-20</div>
<div class="t" style="right:1352px;top:935.24px;font-size:13px;color:#00B050;font-weight:bold;">2019.02.07</div>
<div class="t" style="left:573px;top:935.24px;font-size:13px;color:#00B050;font-weight:bold;">szabad</div>
<div class="t" style="right:1068px;top:935.24px;font-size:13px;color:#000;font-weight:normal;">2018.12.06</div>
<div class="t" style="left:857px;top:935.24px;font-size:13px;color:#000;font-weight:normal;">szabad</div>
<div class="t" style="right:644px;top:935.24px;font-size:13px;color:#000;font-weight:normal;">2</div>
<div class="t" style="right:488px;top:935.24px;font-size:13px;color:#000;font-weight:normal;">47,915</div>
<div class="t" style="right:430px;top:935.24px;font-size:13px;color:#000;font-weight:normal;">43,2</div>
<div class="t" style="right:381px;top:935.24px;font-size:13px;color:#000;font-weight:normal;">9,43</div>
<div class="t" style="right:282px;top:935.24px;font-size:13px;color:#000;font-weight:normal;">22,55</div>
<div class="t" style="left:1796px;top:935.24px;font-size:13px;color:#000;font-weight:normal;">DK</div>
<div style="left:1056px;top:590px;width:102px;height:19px;border:2px solid #0D6E38;"></div>
<div style="left:1157px;top:608px;width:5px;height:5px;background:#0D6E38;border:1px solid #fff;"></div>
<div style="left:1898px;top:231px;width:1px;height:725px;background:#9E9E9E;"></div>
<div style="left:0px;top:955px;width:1899px;height:1px;background:#9E9E9E;"></div>
<div style="left:182px;top:955px;width:69px;height:23px;background:#fff;border-left:1px solid #9E9E9E;border-right:1px solid #9E9E9E"></div>
<div style="left:182px;top:978px;width:71px;height:2px;background:#0D6E38;"></div>
<div class="t" style="left:194.7px;top:960.74px;font-size:13px;color:#107C41;font-weight:bold;transform:scaleX(0.9493);transform-origin:0 0;">lakasok</div>
</body></html>
